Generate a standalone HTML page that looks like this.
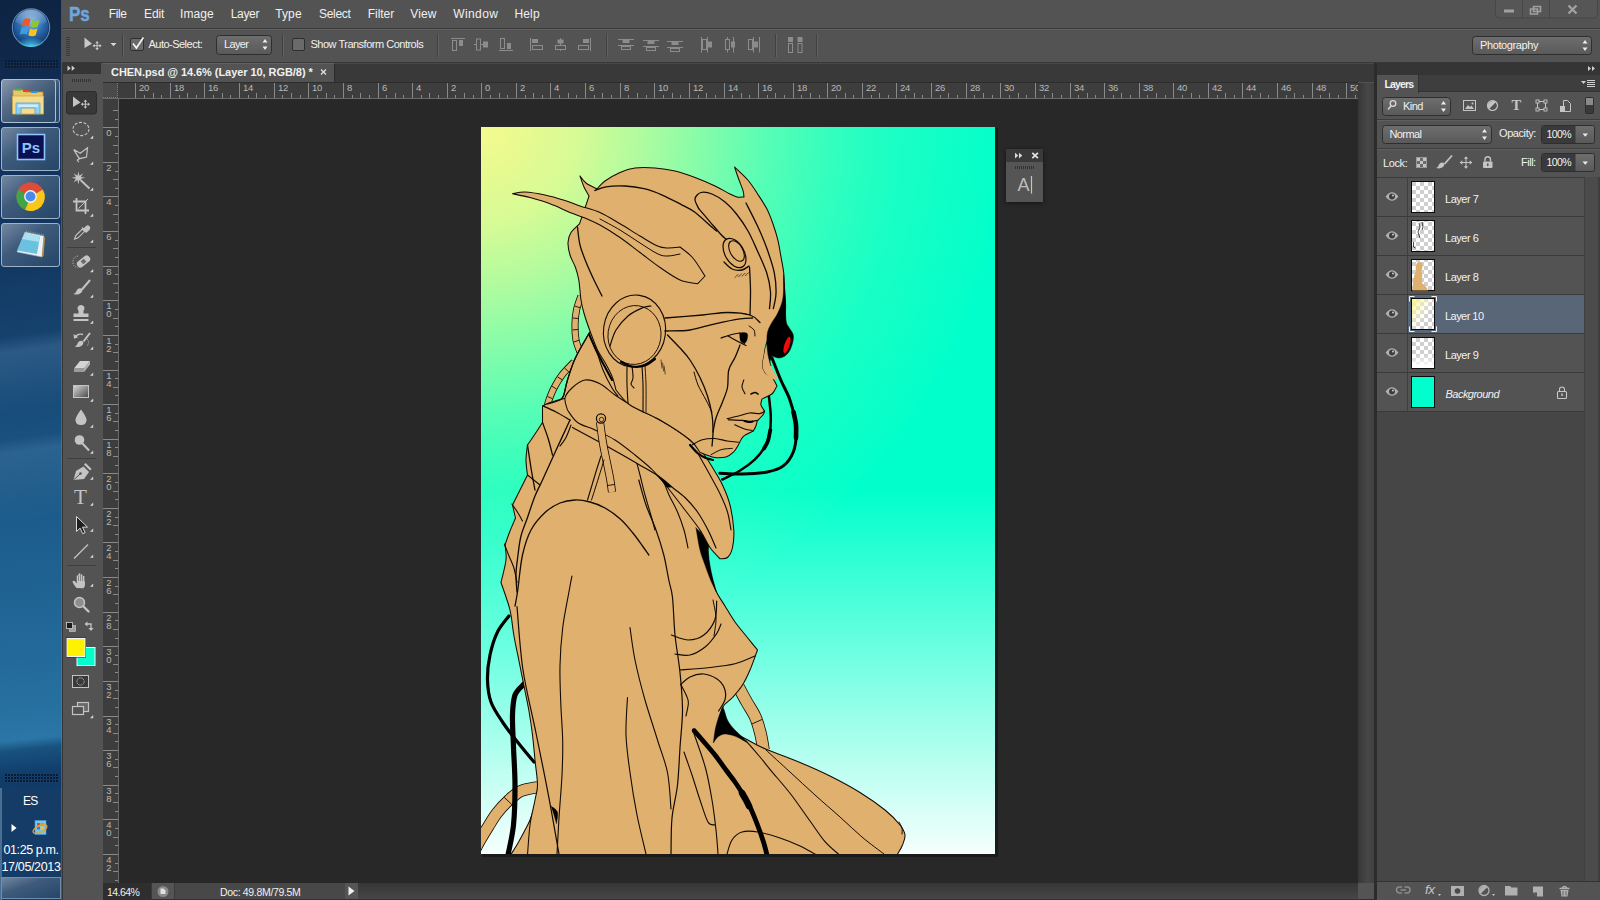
<!DOCTYPE html>
<html>
<head>
<meta charset="utf-8">
<title>CHEN.psd @ 14.6% (Layer 10, RGB/8) *</title>
<style>
html,body{margin:0;padding:0;}
body{width:1600px;height:900px;overflow:hidden;position:relative;background:#535353;font-family:"Liberation Sans",sans-serif;font-size:11px;color:#e6e6e6;}
.abs{position:absolute;}
div,span{box-sizing:border-box;}
svg{position:absolute;overflow:visible;}
.t{position:absolute;white-space:nowrap;line-height:1;}
/* taskbar */
#taskbar{left:0;top:0;width:62px;height:900px;background:linear-gradient(172deg,rgba(255,255,255,0) 0,rgba(255,255,255,0) 335px,rgba(150,195,235,.17) 350px,rgba(150,195,235,.04) 395px,rgba(255,255,255,0) 410px,rgba(255,255,255,0) 436px,rgba(150,200,235,.14) 450px,rgba(150,200,235,.03) 500px,rgba(255,255,255,0) 520px),linear-gradient(174deg,#0d2342 0px,#10284a 60px,#12305a 110px,#123862 260px,#184b78 400px,#1c5c8c 520px,#226898 640px,#2670a0 705px,#2a76a6 738px,#18527f 748px,#113d6b 772px,#0f3560 830px,#0f3560 900px);}
/* menubar */
#menubar{left:62px;top:0;width:1538px;height:28px;background:#535353;}
#optbar{left:62px;top:29px;width:1538px;height:33px;background:#535353;border-top:1px solid #636363;}
.hl{background:#383838;height:1px;left:62px;width:1538px;}
#canvas{left:119px;top:99px;width:1239px;height:784px;background:#282828;}
#tabbar{left:103px;top:63px;width:1271px;height:19px;background:#393939;border-top:1px solid #484848;}
#tab{left:103px;top:63px;width:232px;height:19px;background:#535353;border-right:1px solid #2a2a2a;border-top:1px solid #626262;}
#rulerh{left:103px;top:82px;width:1255px;height:17px;background:#3d3d3d;border-bottom:1px solid #6a6a6a;border-top:1px solid #2c2c2c;}
#rulerv{left:103px;top:99px;width:16px;height:784px;background:#3d3d3d;border-right:1px solid #6a6a6a;}
#vscroll{left:1358px;top:83px;width:16px;height:800px;background:linear-gradient(90deg,#373737,#474747 60%,#404040);}
#status{left:103px;top:883px;width:1271px;height:17px;background:#484848;border-bottom:1px solid #303030;}
#toolhead{left:63px;top:63px;width:38px;height:11px;background:#353535;}
#tools{left:63px;top:74px;width:38px;height:826px;background:#535353;}
#panelhead{left:1377px;top:63px;width:223px;height:12px;background:#353535;}
#panel{left:1377px;top:75px;width:223px;height:825px;background:#535353;}
</style>
</head>
<body>
<div id="taskbar" class="abs"></div>
<div id="menubar" class="abs"></div>
<div class="abs hl" style="top:28px"></div>
<div id="optbar" class="abs"></div>
<div class="abs hl" style="top:62px"></div>
<div id="toolhead" class="abs"></div>
<div id="tools" class="abs"></div>
<div id="tabbar" class="abs"></div>
<div id="tab" class="abs"></div>
<div id="rulerh" class="abs"></div>
<div id="rulerv" class="abs"></div>
<div id="canvas" class="abs"></div>
<div id="vscroll" class="abs"></div>
<div id="status" class="abs"></div>
<div id="panelhead" class="abs"></div>
<div id="panel" class="abs"></div>
<svg class="abs" style="left:0;top:0" width="1600" height="900" viewBox="0 0 1600 900">
<defs>
<radialGradient id="gy" gradientUnits="userSpaceOnUse" cx="481" cy="127" r="520"><stop offset="0" stop-color="#fafa8c" stop-opacity="0.98"/><stop offset="0.185" stop-color="#fafa8c" stop-opacity="0.86"/><stop offset="0.31" stop-color="#fafa8c" stop-opacity="0.7"/><stop offset="0.433" stop-color="#fafa8c" stop-opacity="0.52"/><stop offset="0.556" stop-color="#fafa8c" stop-opacity="0.34"/><stop offset="0.68" stop-color="#fafa8c" stop-opacity="0.2"/><stop offset="0.8" stop-color="#fafa8c" stop-opacity="0.1"/><stop offset="0.99" stop-color="#fafa8c" stop-opacity="0.02"/><stop offset="1" stop-color="#fafa8c" stop-opacity="0"/></radialGradient>
<linearGradient id="gw" gradientUnits="userSpaceOnUse" x1="0" y1="490" x2="0" y2="860"><stop offset="0" stop-color="#fff" stop-opacity="0"/><stop offset="1" stop-color="#fff" stop-opacity="0.98"/></linearGradient>
<clipPath id="artclip"><rect x="481" y="127" width="514" height="727"/></clipPath>
</defs>
<rect x="482" y="128" width="516" height="729" fill="#000" opacity="0.35"/>
<rect x="481" y="127" width="514" height="727" fill="#00ffcb"/>
<rect x="481" y="127" width="514" height="727" fill="url(#gy)"/>
<rect x="481" y="127" width="514" height="727" fill="url(#gw)"/>
<g clip-path="url(#artclip)">
<path d="M772.0 358.0C773.5 361.7 777.9 373.2 780.8 380.0C783.7 386.8 787.2 392.5 789.5 398.7C791.8 404.9 793.4 411.5 794.5 417.3C795.6 423.1 796.6 427.7 796.4 433.5C796.2 439.3 795.4 446.8 793.2 452.2C791.0 457.6 787.6 462.6 783.3 465.9C778.9 469.2 774.0 470.6 767.1 472.0C760.2 473.4 750.1 473.8 742.2 474.0C734.3 474.2 723.5 473.4 719.8 473.3" fill="none" stroke="#000" stroke-width="3.0" stroke-linecap="round" stroke-linejoin="round"/>
<path d="M793.5 412.0C793.9 414.2 795.6 420.7 796.0 425.0C796.4 429.3 796.0 435.8 796.0 438.0" fill="none" stroke="#000" stroke-width="4.6" stroke-linecap="round" stroke-linejoin="round"/>
<path d="M768.0 392.0C768.2 392.9 768.5 393.2 769.0 397.4C769.5 401.6 770.7 411.3 770.8 417.3C770.9 423.3 770.6 428.5 769.6 433.5C768.6 438.5 767.1 442.8 764.6 447.2C762.1 451.6 758.9 455.7 754.7 459.6C750.6 463.5 745.1 467.5 739.7 470.8C734.3 474.1 725.2 478.1 722.3 479.5" fill="none" stroke="#000" stroke-width="2.5" stroke-linecap="round" stroke-linejoin="round"/>
<path d="M770.3 430.0C769.9 431.8 769.0 437.9 768.0 441.0C767.0 444.1 764.7 447.2 764.0 448.5" fill="none" stroke="#000" stroke-width="3.8" stroke-linecap="round" stroke-linejoin="round"/>
<path d="M509.0 616.0C507.1 618.7 500.7 625.5 497.5 632.0C494.3 638.5 491.7 647.0 490.0 655.0C488.3 663.0 487.3 672.2 487.5 680.0C487.7 687.8 488.5 695.0 491.0 702.0C493.5 709.0 498.1 715.3 502.5 722.0C506.9 728.7 512.2 735.3 517.5 742.0C522.8 748.7 531.2 758.7 534.0 762.0" fill="none" stroke="#000" stroke-width="3.2" stroke-linecap="round" stroke-linejoin="round"/>
<path d="M581.0 296.0C580.2 298.3 577.5 305.2 576.5 310.0C575.5 314.8 575.1 320.0 575.0 325.0C574.9 330.0 575.2 335.5 576.0 340.0C576.8 344.5 579.3 350.0 580.0 352.0" fill="none" stroke="#120a03" stroke-width="7.1" stroke-linecap="butt"/>
<path d="M581.0 296.0C580.2 298.3 577.5 305.2 576.5 310.0C575.5 314.8 575.1 320.0 575.0 325.0C574.9 330.0 575.2 335.5 576.0 340.0C576.8 344.5 579.3 350.0 580.0 352.0" fill="none" stroke="#e0b06f" stroke-width="5.5" stroke-linecap="butt"/>
<path d="M580.1 307.8 L574.9 306.1" stroke="#120a03" stroke-width="0.9"/>
<path d="M578.4 318.5 L572.9 318.0" stroke="#120a03" stroke-width="0.9"/>
<path d="M578.1 329.5 L572.6 329.9" stroke="#120a03" stroke-width="0.9"/>
<path d="M579.0 340.2 L573.8 342.0" stroke="#120a03" stroke-width="0.9"/>
<path d="M574.0 362.0C572.0 364.2 565.3 370.7 562.0 375.0C558.7 379.3 556.2 383.8 554.0 388.0C551.8 392.2 550.2 396.7 549.0 400.0C547.8 403.3 547.3 406.7 547.0 408.0" fill="none" stroke="#120a03" stroke-width="7.1" stroke-linecap="butt"/>
<path d="M574.0 362.0C572.0 364.2 565.3 370.7 562.0 375.0C558.7 379.3 556.2 383.8 554.0 388.0C551.8 392.2 550.2 396.7 549.0 400.0C547.8 403.3 547.3 406.7 547.0 408.0" fill="none" stroke="#e0b06f" stroke-width="5.5" stroke-linecap="butt"/>
<path d="M568.7 371.8 L564.6 368.1" stroke="#120a03" stroke-width="0.9"/>
<path d="M562.3 379.8 L557.6 377.0" stroke="#120a03" stroke-width="0.9"/>
<path d="M556.6 389.1 L551.9 386.2" stroke="#120a03" stroke-width="0.9"/>
<path d="M552.5 398.7 L547.5 396.5" stroke="#120a03" stroke-width="0.9"/>
<path d="M538.0 787.0C535.2 787.7 525.8 788.8 521.0 791.0C516.2 793.2 513.0 796.3 509.0 800.0C505.0 803.7 500.5 808.5 497.0 813.0C493.5 817.5 491.0 822.2 488.0 827.0C485.0 831.8 481.7 837.2 479.0 842.0C476.3 846.8 473.2 853.7 472.0 856.0" fill="none" stroke="#120a03" stroke-width="12.1" stroke-linecap="butt"/>
<path d="M538.0 787.0C535.2 787.7 525.8 788.8 521.0 791.0C516.2 793.2 513.0 796.3 509.0 800.0C505.0 803.7 500.5 808.5 497.0 813.0C493.5 817.5 491.0 822.2 488.0 827.0C485.0 831.8 481.7 837.2 479.0 842.0C476.3 846.8 473.2 853.7 472.0 856.0" fill="none" stroke="#e0b06f" stroke-width="10.5" stroke-linecap="butt"/>
<path d="M511.9 804.5 L504.2 797.4" stroke="#120a03" stroke-width="0.9"/>
<path d="M524.0 684.0C522.5 685.8 516.9 689.8 515.0 695.0C513.1 700.2 512.8 706.3 512.5 715.0C512.2 723.7 513.1 735.3 513.5 747.0C513.9 758.7 515.0 772.0 515.0 785.0C515.0 798.0 514.7 813.3 513.5 825.0C512.3 836.7 508.9 850.0 508.0 855.0" fill="none" stroke="#000" stroke-width="5.2" stroke-linecap="round" stroke-linejoin="round"/>
<path d="M535.0 805.0C534.2 807.5 531.8 815.5 530.0 820.0C528.2 824.5 526.0 828.2 524.0 832.0C522.0 835.8 520.3 839.0 518.0 843.0C515.7 847.0 511.3 853.8 510.0 856.0L510.0 856.0C513.7 856.0 528.3 856.0 532.0 856.0L532.0 856.0C532.5 847.5 534.5 813.5 535.0 805.0Z" fill="#e0b06f" stroke="#120a03" stroke-width="1.05" stroke-linejoin="round" stroke-linecap="round" />
<path d="M738.5 687.0C739.9 689.5 743.9 697.0 746.7 702.0C749.5 707.0 753.0 711.8 755.3 717.0C757.6 722.2 759.0 727.5 760.4 733.0C761.8 738.5 763.0 747.2 763.5 750.0" fill="none" stroke="#120a03" stroke-width="12.6" stroke-linecap="butt"/>
<path d="M738.5 687.0C739.9 689.5 743.9 697.0 746.7 702.0C749.5 707.0 753.0 711.8 755.3 717.0C757.6 722.2 759.0 727.5 760.4 733.0C761.8 738.5 763.0 747.2 763.5 750.0" fill="none" stroke="#e0b06f" stroke-width="11" stroke-linecap="butt"/>
<path d="M761.9 719.5 L751.9 724.0" stroke="#120a03" stroke-width="0.9"/>
<path d="M588.8 333.8C586.5 337.9 578.5 351.0 575.0 358.8C571.5 366.5 569.4 374.0 567.5 380.0C565.6 386.0 565.0 391.7 563.8 395.0C562.5 398.3 562.7 398.5 560.0 400.0C557.3 401.5 549.6 403.3 547.5 404.0L547.5 404.0C556.2 406.7 584.6 419.0 600.0 420.0C615.4 421.0 633.3 411.7 640.0 410.0L640.0 410.0C637.5 405.0 630.7 390.0 625.0 380.0C619.3 370.0 611.5 357.8 606.0 350.0C600.5 342.2 594.9 335.7 592.0 333.0C589.1 330.3 589.3 333.6 588.8 333.8Z" fill="#e0b06f" stroke="#120a03" stroke-width="1.05" stroke-linejoin="round" stroke-linecap="round" />
<path d="M640.0 410.0C633.3 407.5 612.2 397.0 600.0 395.0C587.8 393.0 575.8 396.6 567.0 398.0C558.2 399.4 550.8 402.6 547.5 403.5L547.5 403.5C546.7 403.9 543.3 405.6 542.5 406.0L542.5 406.0C542.5 408.8 542.5 419.8 542.5 422.5L542.5 422.5C541.2 424.4 537.5 430.2 535.0 434.0C532.5 437.8 528.8 443.2 527.5 445.0L527.5 445.0C527.2 447.5 526.0 455.0 526.0 460.0C526.0 465.0 527.2 472.5 527.5 475.0L527.5 475.0C526.2 477.5 522.5 485.0 520.0 490.0C517.5 495.0 513.8 502.5 512.5 505.0L512.5 505.0C513.0 507.2 515.0 515.8 515.5 518.0L515.5 518.0C514.6 520.2 511.8 526.5 510.0 531.0C508.2 535.5 505.8 542.7 505.0 545.0L505.0 545.0C505.2 547.5 506.7 553.8 506.0 560.0C505.3 566.2 501.8 578.8 501.0 582.5L501.0 582.5C502.5 587.1 507.9 601.2 510.0 610.0C512.1 618.8 512.3 626.7 513.8 635.0C515.2 643.3 517.1 651.7 518.8 660.0C520.4 668.3 522.1 676.7 523.8 685.0C525.4 693.3 527.3 701.7 528.8 710.0C530.2 718.3 531.5 726.7 532.5 735.0C533.5 743.3 534.2 751.7 535.0 760.0C535.8 768.3 537.5 778.3 537.5 785.0C537.5 791.7 536.2 793.3 535.0 800.0C533.8 806.7 531.2 815.8 530.0 825.0C528.8 834.2 527.9 850.0 527.5 855.0L527.5 855.0C589.1 855.0 835.4 855.0 897.0 855.0L897.0 855.0C897.9 853.3 901.2 848.3 902.5 845.0C903.8 841.7 905.4 838.3 905.0 835.0C904.6 831.7 903.3 829.2 900.0 825.0C896.7 820.8 891.7 815.4 885.0 810.0C878.3 804.6 869.2 798.2 860.0 792.5C850.8 786.8 840.0 781.0 830.0 776.0C820.0 771.0 810.8 767.0 800.0 762.5C789.2 758.0 774.2 752.8 765.0 748.8C755.8 744.8 751.2 741.5 745.0 738.5C738.8 735.5 730.8 732.2 728.0 731.0L728.0 731.0C726.3 730.2 719.7 726.8 718.0 726.0L718.0 726.0C718.8 722.9 720.1 712.2 722.5 707.5C724.9 702.8 729.2 701.2 732.5 697.5C735.8 693.8 739.6 689.6 742.5 685.0C745.4 680.4 747.5 675.8 750.0 670.0C752.5 664.2 756.2 653.3 757.5 650.0L757.5 650.0C755.8 647.8 750.8 641.7 747.0 637.0C743.2 632.3 738.7 627.2 735.0 622.0C731.3 616.8 728.2 611.2 725.0 606.0C721.8 600.8 718.3 596.2 716.0 591.0C713.7 585.8 712.2 579.8 711.0 575.0C709.8 570.2 709.6 568.2 708.8 562.5C707.9 556.8 707.5 546.4 706.0 541.0C704.5 535.6 702.7 541.8 700.0 530.0C697.3 518.2 700.0 490.0 690.0 470.0C680.0 450.0 648.3 420.0 640.0 410.0Z" fill="#e0b06f" stroke="#120a03" stroke-width="1.05" stroke-linejoin="round" stroke-linecap="round" />
<path d="M723.0 707.0C722.3 708.5 720.2 712.5 719.0 716.0C717.8 719.5 716.5 723.5 715.5 728.0C714.5 732.5 713.7 740.5 713.3 743.0L713.3 743.0C713.8 742.2 715.5 739.7 716.5 738.5C717.5 737.3 718.0 736.8 719.4 736.0C720.8 735.2 722.5 734.0 725.0 734.0C727.5 734.0 731.7 735.0 734.5 736.0C737.3 737.0 739.8 738.5 742.0 739.7C744.2 740.9 747.0 742.5 748.0 743.0L748.0 743.0C747.2 742.1 745.2 739.8 743.0 737.5C740.8 735.2 737.0 732.2 734.5 729.5C732.0 726.8 729.7 724.1 728.0 721.0C726.3 717.9 725.3 713.3 724.5 711.0C723.7 708.7 723.2 707.7 723.0 707.0Z" fill="#000" stroke="#120a03" stroke-width="0.4" stroke-linejoin="round" stroke-linecap="round" />
<path d="M696.0 528.0C696.7 531.7 698.5 543.8 700.0 550.0C701.5 556.2 703.2 559.8 705.0 565.0C706.8 570.2 709.1 576.5 711.0 581.0C712.9 585.5 715.6 590.2 716.5 592.0L716.5 592.0C715.8 589.6 713.7 582.4 712.5 577.5C711.3 572.6 710.2 567.4 709.5 562.5C708.8 557.6 708.1 551.1 708.5 548.0C708.9 544.9 711.4 544.7 712.0 544.0L712.0 544.0C709.3 541.3 698.7 530.7 696.0 528.0Z" fill="#000" stroke="#120a03" stroke-width="0.5" stroke-linejoin="round" stroke-linecap="round" />
<path d="M567.5 410.0C567.1 408.0 564.2 401.8 565.0 398.0C565.8 394.2 569.2 390.5 572.5 387.5C575.8 384.5 580.4 380.6 585.0 380.0C589.6 379.4 595.0 381.2 600.0 383.8C605.0 386.2 609.2 391.0 615.0 395.0C620.8 399.0 628.3 403.8 635.0 407.5C641.7 411.2 648.8 414.2 655.0 417.5C661.2 420.8 666.7 423.8 672.5 427.5C678.3 431.2 685.0 435.8 690.0 440.0C695.0 444.2 698.8 447.9 702.5 452.5C706.2 457.1 709.2 462.1 712.5 467.5C715.8 472.9 719.6 478.8 722.5 485.0C725.4 491.2 728.1 497.5 730.0 505.0C731.9 512.5 733.3 522.9 733.8 530.0C734.2 537.1 733.5 542.9 732.5 547.5C731.5 552.1 729.6 555.6 727.5 557.5C725.4 559.4 721.2 558.5 720.0 558.8L720.0 558.8C718.3 556.9 713.3 552.3 710.0 547.5C706.7 542.7 704.2 536.2 700.0 530.0C695.8 523.8 690.4 517.1 685.0 510.0C679.6 502.9 672.9 494.2 667.5 487.5C662.1 480.8 657.9 475.4 652.5 470.0C647.1 464.6 641.2 460.0 635.0 455.0C628.8 450.0 621.7 444.2 615.0 440.0C608.3 435.8 601.2 432.9 595.0 430.0C588.8 427.1 582.1 425.8 577.5 422.5C572.9 419.2 569.2 412.1 567.5 410.0Z" fill="#e0b06f" stroke="#120a03" stroke-width="1.05" stroke-linejoin="round" stroke-linecap="round" />
<path d="M589.0 196.0C588.2 194.5 585.5 190.3 584.0 187.0C582.5 183.7 580.7 177.8 580.0 176.0L580.0 176.0C581.0 177.2 583.2 180.8 586.0 183.0C588.8 185.2 595.2 188.0 597.0 189.0L596.0 190.0C597.5 188.5 601.0 183.9 605.0 181.0C609.0 178.1 615.0 174.7 620.0 172.5C625.0 170.3 629.2 168.8 635.0 168.0C640.8 167.2 648.3 167.5 655.0 168.0C661.7 168.5 668.3 169.4 675.0 171.0C681.7 172.6 688.3 175.0 695.0 177.5C701.7 180.0 709.2 183.2 715.0 186.0C720.8 188.8 726.3 192.2 730.0 194.0C733.7 195.8 734.7 196.5 737.0 197.0C739.3 197.5 742.8 197.0 744.0 197.0L744.0 197.0C743.8 195.9 743.9 193.7 743.0 190.6C742.1 187.5 739.8 182.2 738.4 178.3C737.0 174.4 735.2 168.9 734.6 167.0L734.6 167.0C736.8 169.2 744.1 175.7 747.8 180.0C751.5 184.3 753.9 188.2 757.0 193.0C760.1 197.8 764.0 203.4 766.7 208.6C769.4 213.8 771.1 218.7 773.0 224.0C774.9 229.3 776.7 235.2 778.0 240.7C779.3 246.2 780.0 251.7 781.0 257.0C782.0 262.4 783.1 267.3 783.7 272.8C784.3 278.3 784.3 284.6 784.6 290.0C784.9 295.4 785.5 299.8 785.6 305.0C785.7 310.2 785.1 318.3 785.0 321.0L785.0 321.0C782.8 322.5 775.2 326.0 772.0 330.0C768.8 334.0 767.3 340.7 766.0 345.0C764.7 349.3 764.6 352.7 764.0 356.0C763.4 359.3 762.3 362.2 762.5 365.0C762.7 367.8 763.3 370.3 765.0 372.5C766.7 374.7 770.5 375.8 772.5 378.0C774.5 380.2 776.2 384.7 777.0 386.0L777.0 386.0C776.2 387.2 774.5 391.6 772.5 393.5C770.5 395.4 766.8 396.6 765.0 397.5C763.2 398.4 762.5 398.8 762.0 399.0L762.0 399.0C761.8 400.0 760.5 402.9 760.9 404.9C761.3 406.9 764.0 410.0 764.6 411.0L764.6 411.0C764.4 411.5 764.6 412.5 763.4 414.2C762.2 415.9 758.2 419.9 757.2 421.0L757.2 421.0C757.0 421.8 756.5 424.3 755.9 426.0C755.3 427.7 753.8 430.2 753.4 431.0L753.4 431.0C752.0 431.7 746.8 433.9 744.7 435.4C742.6 436.8 742.0 438.1 741.0 439.7C740.0 441.2 739.8 442.6 738.5 444.7C737.2 446.8 735.6 450.1 733.5 452.2C731.4 454.2 728.7 456.1 726.0 457.0C723.3 457.9 719.6 457.8 717.3 457.8C715.0 457.8 715.3 457.9 712.4 457.0C709.5 456.1 702.1 453.2 700.0 452.5L700.0 452.5C698.3 450.4 696.7 445.4 690.0 440.0C683.3 434.6 670.0 425.8 660.0 420.0C650.0 414.2 637.3 410.0 630.0 405.0C622.7 400.0 618.3 392.5 616.0 390.0L616.0 390.0C615.4 387.9 614.3 382.1 612.5 377.5C610.7 372.9 607.5 367.1 605.0 362.5C602.5 357.9 600.0 355.2 597.5 350.0C595.0 344.8 592.3 337.2 590.0 331.0C587.7 324.8 585.2 317.7 583.8 312.5C582.2 307.3 581.8 305.4 581.0 300.0C580.2 294.6 579.7 285.4 578.8 280.0C577.8 274.6 577.0 271.7 575.5 267.5C574.0 263.3 571.2 259.2 570.0 255.0C568.8 250.8 567.8 246.2 568.0 242.5C568.2 238.8 569.1 235.6 571.0 232.5C572.9 229.4 578.1 225.2 579.5 223.8L579.5 223.8C580.4 221.1 583.4 212.6 585.0 208.0C586.6 203.4 588.3 198.0 589.0 196.0Z" fill="#e0b06f" stroke="#120a03" stroke-width="1.05" stroke-linejoin="round" stroke-linecap="round" />
<path d="M512.5 193.8C514.6 193.5 519.6 191.8 525.0 192.0C530.4 192.2 538.3 193.6 545.0 195.0C551.7 196.4 559.2 198.7 565.0 200.5C570.8 202.3 574.2 204.0 580.0 206.0C585.8 208.0 593.3 209.5 600.0 212.5C606.7 215.5 613.3 219.8 620.0 223.8C626.7 227.7 633.8 232.3 640.0 236.0C646.2 239.7 652.8 244.0 657.5 246.0C662.2 248.0 664.2 247.8 668.0 248.0C671.8 248.2 678.0 247.2 680.0 247.0L680.0 247.0C682.1 248.8 688.3 252.7 692.5 257.5C696.7 262.3 702.9 272.9 705.0 276.0L705.0 276.0C703.8 277.3 698.8 282.5 697.5 283.8L697.5 283.8C694.6 283.1 686.2 282.7 680.0 280.0C673.8 277.3 666.7 272.1 660.0 267.5C653.3 262.9 646.7 257.5 640.0 252.5C633.3 247.5 626.7 242.1 620.0 237.5C613.3 232.9 605.8 228.2 600.0 225.0C594.2 221.8 590.0 220.1 585.0 218.0C580.0 215.9 575.8 214.9 570.0 212.5C564.2 210.1 556.7 206.2 550.0 203.8C543.3 201.2 536.2 199.2 530.0 197.5C523.8 195.8 515.4 194.4 512.5 193.8Z" fill="#e0b06f" stroke="#120a03" stroke-width="1.05" stroke-linejoin="round" stroke-linecap="round" />
<ellipse cx="634.5" cy="331" rx="31" ry="36" fill="#e0b06f" stroke="#120a03" stroke-width="1.1" transform="rotate(8 634.5 331)"/>
<ellipse cx="634.5" cy="335" rx="26.5" ry="29.5" fill="none" stroke="#120a03" stroke-width="0.9" transform="rotate(8 634.5 335)"/>
<path d="M610.0 346.0C611.0 343.3 613.0 335.0 616.0 330.0C619.0 325.0 623.7 319.7 628.0 316.0C632.3 312.3 638.2 309.7 642.0 308.0C645.8 306.3 649.5 306.3 651.0 306.0" fill="none" stroke="#120a03" stroke-width="1.2" stroke-linecap="round" stroke-linejoin="round"/>
<path d="M766.0 345.0C766.8 348.5 769.0 360.5 771.0 366.0C773.0 371.5 776.8 376.0 778.0 378.0L778.0 378.0C777.1 378.2 774.7 379.9 772.5 379.0C770.3 378.1 766.7 374.8 765.0 372.5C763.3 370.2 762.7 367.8 762.5 365.0C762.3 362.2 763.4 359.3 764.0 356.0C764.6 352.7 765.7 346.8 766.0 345.0Z" fill="#e0b06f" stroke="#120a03" stroke-width="0" stroke-linejoin="round" stroke-linecap="round" />
<path d="M621.0 362.0C622.8 362.8 628.0 365.9 632.0 366.5C636.0 367.1 641.2 366.8 645.0 365.5C648.8 364.2 653.3 360.1 655.0 359.0" fill="none" stroke="#000" stroke-width="2.2" stroke-linecap="round" stroke-linejoin="round"/>
<path d="M589.0 334.0C590.3 337.0 594.3 346.5 597.0 352.0C599.7 357.5 602.5 362.3 605.0 367.0C607.5 371.7 610.8 377.8 612.0 380.0" fill="none" stroke="#000" stroke-width="2.0" stroke-linecap="round" stroke-linejoin="round"/>
<path d="M690.0 445.0C691.3 446.4 695.3 451.3 698.0 453.5C700.7 455.7 703.5 456.9 706.0 458.0C708.5 459.1 711.8 459.7 713.0 460.0" fill="none" stroke="#000" stroke-width="2.2" stroke-linecap="round" stroke-linejoin="round"/>
<path d="M783.5 275.0C783.8 278.3 784.6 287.5 785.0 295.0C785.4 302.5 785.3 314.6 786.0 320.0C786.7 325.4 787.8 325.2 789.0 327.5C790.2 329.8 792.3 331.8 793.0 334.0C793.7 336.2 793.5 338.3 793.0 341.0C792.5 343.7 791.3 347.5 790.0 350.0C788.7 352.5 786.9 354.7 785.0 356.0C783.1 357.3 780.9 358.0 778.8 358.0C776.6 358.0 773.1 356.3 772.0 356.0L772.0 356.0C771.7 357.0 770.2 360.3 770.0 362.0C769.8 363.7 770.8 365.3 771.0 366.0L771.0 366.0C770.5 364.2 768.7 358.7 768.0 355.0C767.3 351.3 767.1 347.5 767.0 343.8C766.9 340.0 766.8 335.8 767.5 332.5C768.2 329.2 769.5 327.1 771.2 323.8C773.0 320.4 776.0 316.9 778.0 312.5C780.0 308.1 782.1 303.8 783.0 297.5C783.9 291.2 783.4 278.8 783.5 275.0Z" fill="#000" stroke="#120a03" stroke-width="0.5" stroke-linejoin="round" stroke-linecap="round" />
<ellipse cx="787" cy="345" rx="2.6" ry="8.6" fill="#f00a0a" transform="rotate(18 787 345)"/>
<path d="M739.5 333.0C740.2 332.9 742.7 332.3 744.0 332.5C745.3 332.7 747.0 332.8 747.5 334.0C748.0 335.2 747.5 338.3 747.0 340.0C746.5 341.7 744.9 343.3 744.5 344.0L744.5 344.0C743.8 343.5 741.3 342.8 740.5 341.0C739.7 339.2 739.7 334.3 739.5 333.0Z" fill="#000" stroke="#120a03" stroke-width="0.3" stroke-linejoin="round" stroke-linecap="round" />
<path d="M721.0 338.0C722.5 337.5 726.8 335.8 730.0 335.0C733.2 334.2 738.3 333.3 740.0 333.0" fill="none" stroke="#120a03" stroke-width="1.2" stroke-linecap="round" stroke-linejoin="round"/>
<path d="M728.0 336.0C729.5 336.8 734.0 339.4 737.0 341.0C740.0 342.6 744.5 344.8 746.0 345.5" fill="none" stroke="#120a03" stroke-width="1.2" stroke-linecap="round" stroke-linejoin="round"/>
<path d="M749.0 326.0C749.8 326.7 753.0 328.3 754.0 330.0C755.0 331.7 754.8 335.0 755.0 336.0" fill="none" stroke="#120a03" stroke-width="1.0" stroke-linecap="round" stroke-linejoin="round"/>
<path d="M551.0 806.0C551.5 807.5 553.1 812.0 554.0 815.0C554.9 818.0 556.1 822.5 556.5 824.0L556.5 824.0C556.7 822.0 558.4 815.0 557.5 812.0C556.6 809.0 552.1 807.0 551.0 806.0Z" fill="#000" stroke="#120a03" stroke-width="0.3" stroke-linejoin="round" stroke-linecap="round" />
<path d="M694.5 731.0C696.1 732.8 700.6 738.0 704.0 742.0C707.4 746.0 711.3 750.3 715.0 755.0C718.7 759.7 722.7 765.5 726.0 770.0C729.3 774.5 732.0 777.7 735.0 782.0C738.0 786.3 741.4 791.7 744.0 796.0C746.6 800.3 748.2 803.2 750.5 808.0C752.8 812.8 755.3 819.3 757.5 825.0C759.7 830.7 761.9 837.0 763.5 842.0C765.1 847.0 766.4 852.8 767.0 855.0" fill="none" stroke="#000" stroke-width="4.8" stroke-linecap="round" stroke-linejoin="round"/>
<path d="M742.0 793.0C742.7 794.2 744.8 797.8 746.0 800.0C747.2 802.2 748.5 805.0 749.0 806.0" fill="none" stroke="#000" stroke-width="6.5" stroke-linecap="round" stroke-linejoin="round"/>
<circle cx="694" cy="730.5" r="2.2" fill="#000"/>
<path d="M594.8 190.6C596.7 190.0 601.0 187.6 606.0 186.8C611.0 186.0 618.7 185.7 625.0 186.0C631.3 186.3 637.7 187.1 644.0 188.7C650.3 190.2 656.5 192.6 662.8 195.3C669.1 198.0 676.3 202.0 681.7 204.8C687.1 207.6 690.3 208.8 695.0 212.3C699.7 215.8 706.4 222.5 710.0 225.6C713.6 228.7 715.5 230.1 716.6 231.0" fill="none" stroke="#120a03" stroke-width="1.3" stroke-linecap="round" stroke-linejoin="round"/>
<path d="M577.5 227.0C577.9 230.0 578.6 239.2 580.0 245.0C581.4 250.8 583.7 256.2 586.0 262.0C588.3 267.8 591.3 274.3 594.0 280.0C596.7 285.7 600.7 293.3 602.0 296.0" fill="none" stroke="#120a03" stroke-width="1.3" stroke-linecap="round" stroke-linejoin="round"/>
<path d="M698.7 208.6C698.1 207.0 694.6 201.7 695.0 199.0C695.4 196.3 698.2 193.3 701.0 192.5C703.8 191.7 708.0 192.4 712.0 194.0C716.0 195.6 720.9 198.7 725.0 202.0C729.1 205.3 732.7 209.2 736.5 214.0C740.3 218.8 744.6 225.0 748.0 231.0C751.4 237.0 753.9 243.0 757.0 250.0C760.1 257.0 764.5 265.9 766.7 272.8C769.0 279.8 770.0 285.7 770.5 291.7C771.0 297.7 769.7 305.9 769.5 308.7" fill="none" stroke="#120a03" stroke-width="1.3" stroke-linecap="round" stroke-linejoin="round"/>
<path d="M698.7 208.6C700.6 210.8 706.2 217.4 710.0 221.8C713.8 226.2 718.7 232.1 721.4 235.0C724.1 237.9 725.2 238.3 726.0 239.0" fill="none" stroke="#120a03" stroke-width="1.3" stroke-linecap="round" stroke-linejoin="round"/>
<path d="M746.0 203.0C747.9 206.8 753.8 218.1 757.3 225.6C760.8 233.1 763.9 240.1 766.7 248.0C769.5 255.9 772.8 265.2 774.3 272.8C775.8 280.4 776.2 287.6 776.0 293.6C775.8 299.6 773.8 306.2 773.3 308.7" fill="none" stroke="#120a03" stroke-width="1.3" stroke-linecap="round" stroke-linejoin="round"/>
<ellipse cx="734.5" cy="253" rx="9.5" ry="16" fill="none" stroke="#120a03" stroke-width="1.2" transform="rotate(-30 734.5 253)"/>
<ellipse cx="736.5" cy="251" rx="6.3" ry="11.3" fill="none" stroke="#120a03" stroke-width="1.1" transform="rotate(-30 736.5 251)"/>
<path d="M724.0 262.0C725.3 263.2 729.0 267.7 732.0 269.0C735.0 270.3 739.2 270.5 742.0 270.0C744.8 269.5 747.8 266.7 749.0 266.0" fill="none" stroke="#120a03" stroke-width="1.3" stroke-linecap="round" stroke-linejoin="round"/>
<path d="M735.0 277.5C735.5 277.0 737.5 275.0 738.0 274.5" fill="none" stroke="#120a03" stroke-width="0.7" stroke-linecap="round" stroke-linejoin="round"/>
<path d="M738.5 276.9C739.0 276.4 741.0 274.4 741.5 273.9" fill="none" stroke="#120a03" stroke-width="0.7" stroke-linecap="round" stroke-linejoin="round"/>
<path d="M742.0 276.3C742.5 275.8 744.5 273.8 745.0 273.3" fill="none" stroke="#120a03" stroke-width="0.7" stroke-linecap="round" stroke-linejoin="round"/>
<path d="M745.5 275.7C746.0 275.2 748.0 273.2 748.5 272.7" fill="none" stroke="#120a03" stroke-width="0.7" stroke-linecap="round" stroke-linejoin="round"/>
<path d="M600.0 219.0C603.3 220.8 613.3 226.0 620.0 230.0C626.7 234.0 633.7 239.0 640.0 243.0C646.3 247.0 653.3 251.8 658.0 254.0C662.7 256.2 664.3 256.0 668.0 256.0C671.7 256.0 678.0 254.3 680.0 254.0" fill="none" stroke="#120a03" stroke-width="1.0" stroke-linecap="round" stroke-linejoin="round"/>
<path d="M665.0 318.0C671.2 317.5 692.1 315.9 702.5 315.0C712.9 314.1 719.6 312.5 727.5 312.5C735.4 312.5 744.6 313.3 750.0 315.0C755.4 316.7 758.3 321.2 760.0 322.5" fill="none" stroke="#120a03" stroke-width="1.3" stroke-linecap="round" stroke-linejoin="round"/>
<path d="M665.0 331.0C669.2 330.8 681.7 331.2 690.0 330.0C698.3 328.8 706.7 325.6 715.0 323.8C723.3 321.9 733.8 319.7 740.0 318.8C746.2 317.8 750.4 318.1 752.5 318.0" fill="none" stroke="#120a03" stroke-width="1.3" stroke-linecap="round" stroke-linejoin="round"/>
<path d="M749.5 267.0C749.7 270.8 750.4 282.0 750.5 290.0C750.6 298.0 750.1 310.8 750.0 315.0" fill="none" stroke="#120a03" stroke-width="1.3" stroke-linecap="round" stroke-linejoin="round"/>
<path d="M667.5 335.0C669.6 337.2 676.2 343.8 680.0 348.0C683.8 352.2 686.7 355.1 690.0 360.0C693.3 364.9 697.1 371.5 700.0 377.5C702.9 383.5 705.5 389.8 707.5 396.0C709.5 402.2 711.1 409.0 712.0 415.0C712.9 421.0 713.0 426.8 713.0 432.0C713.0 437.2 712.2 443.7 712.0 446.0" fill="none" stroke="#120a03" stroke-width="1.3" stroke-linecap="round" stroke-linejoin="round"/>
<path d="M740.0 345.0C739.2 347.1 736.9 353.3 735.0 357.5C733.1 361.7 730.0 365.0 728.8 370.0C727.5 375.0 728.5 382.2 727.5 387.5C726.5 392.8 724.4 396.9 722.5 402.0C720.6 407.1 717.6 413.0 716.0 418.0C714.4 423.0 713.5 429.7 713.0 432.0" fill="none" stroke="#120a03" stroke-width="1.3" stroke-linecap="round" stroke-linejoin="round"/>
<path d="M694.0 372.0C694.7 374.2 696.0 380.3 698.0 385.0C700.0 389.7 703.7 395.5 706.0 400.0C708.3 404.5 711.0 410.0 712.0 412.0" fill="none" stroke="#120a03" stroke-width="1.0" stroke-linecap="round" stroke-linejoin="round"/>
<path d="M743.8 380.0C743.5 381.2 741.8 384.7 742.0 387.0C742.2 389.3 744.5 392.6 745.0 393.8" fill="none" stroke="#120a03" stroke-width="1.1" stroke-linecap="round" stroke-linejoin="round"/>
<path d="M751.0 394.0C751.7 393.8 753.8 392.5 755.0 392.5C756.2 392.5 757.5 393.8 758.0 394.0" fill="none" stroke="#120a03" stroke-width="1.7" stroke-linecap="round" stroke-linejoin="round"/>
<path d="M727.3 418.6C729.2 418.2 734.8 416.9 738.5 416.0C742.2 415.1 746.2 413.4 749.7 413.0C753.2 412.6 757.2 413.9 759.6 413.6C762.0 413.4 763.3 411.9 764.0 411.5" fill="none" stroke="#120a03" stroke-width="1.2" stroke-linecap="round" stroke-linejoin="round"/>
<path d="M728.5 419.8C730.8 419.9 738.6 420.1 742.2 420.4C745.8 420.7 747.5 421.5 750.0 421.5C752.5 421.5 756.0 420.6 757.2 420.4" fill="none" stroke="#120a03" stroke-width="1.3" stroke-linecap="round" stroke-linejoin="round"/>
<path d="M744.5 421.0C745.2 421.2 747.7 421.9 749.0 422.0C750.3 422.1 751.9 421.7 752.5 421.6" fill="none" stroke="#000" stroke-width="2.0" stroke-linecap="round" stroke-linejoin="round"/>
<path d="M734.8 424.8C736.4 425.5 741.8 428.1 744.7 429.0C747.6 429.9 751.0 430.2 752.2 430.4" fill="none" stroke="#120a03" stroke-width="1.1" stroke-linecap="round" stroke-linejoin="round"/>
<path d="M692.4 444.7C694.1 443.9 698.7 440.7 702.4 439.7C706.1 438.7 710.6 438.3 714.8 438.5C718.9 438.7 723.3 440.4 727.3 441.0C731.2 441.6 736.6 442.0 738.5 442.2" fill="none" stroke="#120a03" stroke-width="1.1" stroke-linecap="round" stroke-linejoin="round"/>
<path d="M711.0 454.7C712.7 453.9 717.5 450.8 721.0 449.7C724.5 448.6 730.4 448.6 732.3 448.4" fill="none" stroke="#120a03" stroke-width="1.0" stroke-linecap="round" stroke-linejoin="round"/>
<path d="M661.0 360.0C661.2 361.3 661.8 366.7 662.0 368.0" fill="none" stroke="#120a03" stroke-width="0.6499999999999999" stroke-linecap="round" stroke-linejoin="round"/>
<path d="M662.6 363.0C662.8 364.3 663.4 369.7 663.6 371.0" fill="none" stroke="#120a03" stroke-width="0.6499999999999999" stroke-linecap="round" stroke-linejoin="round"/>
<path d="M664.2 366.0C664.4 367.3 665.0 372.7 665.2 374.0" fill="none" stroke="#120a03" stroke-width="0.6499999999999999" stroke-linecap="round" stroke-linejoin="round"/>
<path d="M627.0 367.0C627.0 370.0 626.8 379.0 627.0 385.0C627.2 391.0 627.8 400.0 628.0 403.0" fill="none" stroke="#120a03" stroke-width="1.1" stroke-linecap="round" stroke-linejoin="round"/>
<path d="M642.0 366.0C642.2 369.2 642.8 377.3 643.0 385.0C643.2 392.7 643.0 407.5 643.0 412.0" fill="none" stroke="#120a03" stroke-width="1.1" stroke-linecap="round" stroke-linejoin="round"/>
<path d="M645.0 366.0C645.2 369.2 645.8 377.3 646.0 385.0C646.2 392.7 646.0 407.5 646.0 412.0" fill="none" stroke="#120a03" stroke-width="0.8999999999999999" stroke-linecap="round" stroke-linejoin="round"/>
<path d="M632.0 366.0C632.2 368.0 633.2 375.0 633.0 378.0C632.8 381.0 630.8 382.3 631.0 384.0C631.2 385.7 633.5 387.3 634.0 388.0" fill="none" stroke="#120a03" stroke-width="1.1" stroke-linecap="round" stroke-linejoin="round"/>
<path d="M588.8 333.8C586.5 337.9 578.5 351.0 575.0 358.8C571.5 366.5 569.4 374.0 567.5 380.0C565.6 386.0 565.0 391.7 563.8 395.0C562.5 398.3 562.7 398.5 560.0 400.0C557.3 401.5 549.6 403.3 547.5 404.0" fill="none" stroke="#120a03" stroke-width="1.3" stroke-linecap="round" stroke-linejoin="round"/>
<path d="M597.0 352.0C598.0 355.0 600.5 364.0 603.0 370.0C605.5 376.0 609.5 383.7 612.0 388.0C614.5 392.3 617.0 394.7 618.0 396.0" fill="none" stroke="#120a03" stroke-width="1.1" stroke-linecap="round" stroke-linejoin="round"/>
<path d="M543.0 406.0C545.2 407.0 551.5 409.7 556.0 412.0C560.5 414.3 567.7 418.7 570.0 420.0" fill="none" stroke="#120a03" stroke-width="1.3" stroke-linecap="round" stroke-linejoin="round"/>
<path d="M570.0 420.0C567.5 425.4 559.6 442.5 555.0 452.5C550.4 462.5 545.8 472.8 542.5 480.0C539.2 487.2 537.5 489.8 535.0 496.0C532.5 502.2 529.8 510.8 527.5 517.5C525.2 524.2 522.6 529.8 521.0 536.0C519.4 542.2 518.8 548.7 518.0 555.0C517.2 561.3 516.2 567.6 516.0 573.8C515.8 579.9 516.8 589.0 517.0 592.0" fill="none" stroke="#120a03" stroke-width="1.3" stroke-linecap="round" stroke-linejoin="round"/>
<path d="M542.5 422.5C543.4 425.1 546.3 432.6 548.0 438.0C549.7 443.4 551.8 452.2 552.5 455.0" fill="none" stroke="#120a03" stroke-width="1.3" stroke-linecap="round" stroke-linejoin="round"/>
<path d="M527.5 445.0C528.1 448.8 529.8 460.5 531.0 468.0C532.2 475.5 534.3 486.3 535.0 490.0" fill="none" stroke="#120a03" stroke-width="1.3" stroke-linecap="round" stroke-linejoin="round"/>
<path d="M527.5 475.0C529.6 476.7 537.9 483.3 540.0 485.0" fill="none" stroke="#120a03" stroke-width="1.1" stroke-linecap="round" stroke-linejoin="round"/>
<path d="M512.0 504.0C513.0 505.5 516.2 510.2 518.0 513.0C519.8 515.8 521.8 519.7 522.5 521.0" fill="none" stroke="#120a03" stroke-width="1.1" stroke-linecap="round" stroke-linejoin="round"/>
<path d="M504.4 544.0C505.2 546.0 507.4 552.1 509.0 556.0C510.6 559.9 512.4 563.1 513.8 567.5C515.1 571.9 516.5 580.0 517.0 582.5" fill="none" stroke="#120a03" stroke-width="1.1" stroke-linecap="round" stroke-linejoin="round"/>
<path d="M698.8 455.0C700.6 458.3 706.5 468.5 710.0 475.0C713.5 481.5 717.1 487.6 720.0 493.8C722.9 499.9 725.7 506.0 727.5 512.0C729.3 518.0 730.4 527.0 731.0 530.0" fill="none" stroke="#120a03" stroke-width="1.1" stroke-linecap="round" stroke-linejoin="round"/>
<path d="M572.5 427.5C576.7 429.8 589.2 436.4 597.5 441.0C605.8 445.6 615.8 451.2 622.5 455.0C629.2 458.8 632.1 460.6 637.5 463.8C642.9 466.9 650.4 470.9 655.0 473.8C659.6 476.6 662.1 478.7 665.0 481.0C667.9 483.3 669.2 484.8 672.5 487.5C675.8 490.2 680.8 493.4 685.0 497.5C689.2 501.6 693.7 506.6 697.5 512.0C701.3 517.4 704.9 524.0 708.0 530.0C711.1 536.0 714.7 545.0 716.0 548.0" fill="none" stroke="#120a03" stroke-width="1.2" stroke-linecap="round" stroke-linejoin="round"/>
<path d="M637.0 463.8C637.5 465.6 638.7 469.8 640.0 475.0C641.3 480.2 643.3 488.8 645.0 495.0C646.7 501.2 648.3 506.2 650.0 512.0C651.7 517.8 654.2 527.0 655.0 530.0" fill="none" stroke="#120a03" stroke-width="1.1" stroke-linecap="round" stroke-linejoin="round"/>
<path d="M664.0 482.5C664.8 484.6 666.8 490.1 669.0 495.0C671.2 499.9 675.0 506.2 677.5 512.0C680.0 517.8 682.2 524.0 684.0 530.0C685.8 536.0 687.3 545.0 688.0 548.0" fill="none" stroke="#120a03" stroke-width="1.1" stroke-linecap="round" stroke-linejoin="round"/>
<path d="M655.0 473.8C656.7 475.0 662.2 478.8 665.0 481.0C667.8 483.2 670.8 486.0 672.0 487.0L672.0 487.0C671.2 487.0 668.7 488.0 667.0 487.0C665.3 486.0 664.0 483.2 662.0 481.0C660.0 478.8 656.2 475.0 655.0 473.8Z" fill="#000" stroke="#120a03" stroke-width="0.3" stroke-linejoin="round" stroke-linecap="round" />
<path d="M571.0 425.0C570.2 427.1 567.8 434.0 566.0 437.5C564.2 441.0 561.0 444.6 560.0 446.0" fill="none" stroke="#120a03" stroke-width="1.1" stroke-linecap="round" stroke-linejoin="round"/>
<path d="M600.0 422.0C600.4 425.0 601.6 434.3 602.5 440.0C603.4 445.7 604.2 449.7 605.5 456.0C606.8 462.3 608.9 472.0 610.0 478.0C611.1 484.0 611.7 489.7 612.0 492.0" fill="none" stroke="#120a03" stroke-width="8.1" stroke-linecap="butt"/>
<path d="M600.0 422.0C600.4 425.0 601.6 434.3 602.5 440.0C603.4 445.7 604.2 449.7 605.5 456.0C606.8 462.3 608.9 472.0 610.0 478.0C611.1 484.0 611.7 489.7 612.0 492.0" fill="none" stroke="#e0b06f" stroke-width="6.5" stroke-linecap="butt"/>
<path d="M615.0 484.4 L607.0 485.6" stroke="#120a03" stroke-width="0.9"/>
<circle cx="601" cy="418.5" r="4.6" fill="#e0b06f" stroke="#120a03" stroke-width="1.2"/><circle cx="601.5" cy="419.500" r="2.200" fill="none" stroke="#120a03" stroke-width="0.800"/>
<path d="M601.0 456.0C600.0 459.2 597.2 467.7 595.0 475.0C592.8 482.3 588.8 495.8 587.5 500.0" fill="none" stroke="#120a03" stroke-width="1.1" stroke-linecap="round" stroke-linejoin="round"/>
<path d="M604.0 460.0C603.1 463.0 600.6 471.3 598.5 478.0C596.4 484.7 592.7 496.3 591.5 500.0" fill="none" stroke="#120a03" stroke-width="1.0" stroke-linecap="round" stroke-linejoin="round"/>
<path d="M515.0 606.0C515.4 603.7 516.2 600.5 517.5 592.0C518.8 583.5 520.2 565.3 522.5 555.0C524.8 544.7 527.2 537.1 531.0 530.0C534.8 522.9 540.2 517.0 545.0 512.5C549.8 508.0 555.0 505.1 560.0 503.0C565.0 500.9 570.0 500.2 575.0 500.0C580.0 499.8 585.0 500.7 590.0 502.0C595.0 503.3 600.0 505.2 605.0 508.0C610.0 510.8 615.4 514.7 620.0 518.8C624.6 522.8 628.8 528.0 632.5 532.5C636.2 537.0 639.8 542.2 642.5 546.0C645.2 549.8 647.7 553.5 648.8 555.0" fill="none" stroke="#120a03" stroke-width="1.3" stroke-linecap="round" stroke-linejoin="round"/>
<path d="M517.0 606.7C518.0 617.2 519.8 649.0 523.0 670.0C526.2 691.0 531.7 711.9 536.0 733.0C540.3 754.1 544.9 776.5 548.7 796.7C552.5 816.9 557.3 844.5 559.0 854.0" fill="none" stroke="#120a03" stroke-width="1.2" stroke-linecap="round" stroke-linejoin="round"/>
<path d="M572.0 576.0C571.5 578.3 570.8 581.4 569.3 590.0C567.8 598.6 564.2 615.2 562.7 627.8C561.2 640.4 560.3 653.0 560.0 665.6C559.7 678.2 560.3 690.8 560.8 703.4C561.2 716.0 562.5 729.1 562.7 741.0C562.9 752.9 562.6 762.2 562.0 775.0C561.4 787.8 559.8 804.8 559.0 818.0C558.2 831.2 557.3 848.0 557.0 854.0" fill="none" stroke="#120a03" stroke-width="1.1" stroke-linecap="round" stroke-linejoin="round"/>
<path d="M630.0 627.5C630.8 632.9 632.5 647.9 635.0 660.0C637.5 672.1 641.2 686.7 645.0 700.0C648.8 713.3 653.8 727.9 657.5 740.0C661.2 752.1 665.2 761.0 667.5 772.5C669.8 784.0 670.4 802.9 671.0 809.0" fill="none" stroke="#120a03" stroke-width="1.1" stroke-linecap="round" stroke-linejoin="round"/>
<path d="M627.5 697.5C627.2 703.8 625.6 722.5 626.0 735.0C626.4 747.5 628.2 759.2 630.0 772.5C631.8 785.8 634.3 801.4 637.0 815.0C639.7 828.6 644.5 847.5 646.0 854.0" fill="none" stroke="#120a03" stroke-width="1.1" stroke-linecap="round" stroke-linejoin="round"/>
<path d="M638.8 480.0C640.0 484.2 643.1 496.7 646.0 505.0C648.9 513.3 653.0 521.7 656.0 530.0C659.0 538.3 661.6 546.7 663.8 555.0C665.9 563.3 667.3 572.9 668.8 580.0C670.2 587.1 671.5 588.3 672.5 597.5C673.5 606.7 673.8 622.5 675.0 635.0C676.2 647.5 678.8 660.0 680.0 672.5C681.2 685.0 682.5 697.5 682.5 710.0C682.5 722.5 680.8 735.0 680.0 747.5C679.2 760.0 678.8 773.2 677.5 785.0C676.2 796.8 673.1 806.5 672.0 818.0C670.9 829.5 671.2 848.0 671.0 854.0" fill="none" stroke="#120a03" stroke-width="1.2" stroke-linecap="round" stroke-linejoin="round"/>
<path d="M671.4 635.0C674.2 635.8 683.0 640.0 688.4 640.0C693.8 640.0 699.1 638.6 703.5 635.3C707.9 632.0 712.6 625.7 714.8 620.0C717.0 614.3 716.4 604.2 716.7 601.0" fill="none" stroke="#120a03" stroke-width="1.2" stroke-linecap="round" stroke-linejoin="round"/>
<path d="M675.0 654.0C677.5 654.2 684.9 656.2 690.0 655.0C695.1 653.8 700.9 650.3 705.4 646.7C709.9 643.1 714.1 637.3 716.7 633.5C719.3 629.7 720.3 625.6 721.0 624.0" fill="none" stroke="#120a03" stroke-width="1.2" stroke-linecap="round" stroke-linejoin="round"/>
<path d="M680.0 670.0C685.0 669.6 700.8 668.5 710.0 667.5C719.2 666.5 727.5 665.7 735.0 663.8C742.5 661.8 751.7 657.3 755.0 656.0" fill="none" stroke="#120a03" stroke-width="1.1" stroke-linecap="round" stroke-linejoin="round"/>
<path d="M680.8 684.5C682.3 683.2 686.2 678.8 690.0 677.0C693.8 675.2 699.0 673.7 703.5 674.0C708.0 674.3 713.2 676.5 716.7 678.8C720.2 681.1 722.9 684.5 724.3 688.0C725.7 691.5 726.0 695.8 725.0 699.6C724.0 703.4 719.7 709.1 718.6 711.0" fill="none" stroke="#120a03" stroke-width="1.2" stroke-linecap="round" stroke-linejoin="round"/>
<path d="M680.8 684.5C681.8 686.4 685.2 692.7 686.5 695.8C687.8 698.9 688.5 699.6 688.4 703.0C688.3 706.4 686.4 713.8 686.0 716.0" fill="none" stroke="#120a03" stroke-width="1.1" stroke-linecap="round" stroke-linejoin="round"/>
<path d="M713.0 600.0C713.5 603.0 715.8 612.0 716.0 618.0C716.2 624.0 714.3 633.0 714.0 636.0" fill="none" stroke="#120a03" stroke-width="1.0" stroke-linecap="round" stroke-linejoin="round"/>
<path d="M693.0 731.0C694.0 733.8 696.8 741.5 699.0 748.0C701.2 754.5 703.8 761.3 706.0 770.0C708.2 778.7 710.3 790.0 712.0 800.0C713.7 810.0 715.0 821.0 716.0 830.0C717.0 839.0 717.7 850.0 718.0 854.0" fill="none" stroke="#120a03" stroke-width="1.1" stroke-linecap="round" stroke-linejoin="round"/>
<path d="M684.0 752.0C685.3 755.8 689.3 767.0 692.0 775.0C694.7 783.0 697.3 792.2 700.0 800.0C702.7 807.8 705.5 817.8 708.0 822.0C710.5 826.2 713.8 824.5 715.0 825.0" fill="none" stroke="#120a03" stroke-width="1.1" stroke-linecap="round" stroke-linejoin="round"/>
<path d="M745.8 740.6C748.2 743.3 755.6 751.8 760.0 757.0C764.4 762.2 766.8 765.5 772.0 771.8C777.2 778.0 784.7 786.3 791.0 794.5C797.3 802.7 804.3 813.1 810.0 821.0C815.7 828.9 820.3 836.2 825.0 841.7C829.7 847.2 836.2 852.0 838.4 854.0" fill="none" stroke="#120a03" stroke-width="1.1" stroke-linecap="round" stroke-linejoin="round"/>
<path d="M766.0 750.0C770.0 753.7 781.8 764.5 790.0 772.0C798.2 779.5 806.7 787.5 815.0 795.0C823.3 802.5 832.2 810.0 840.0 817.0C847.8 824.0 854.7 830.8 862.0 837.0C869.3 843.2 880.3 851.2 884.0 854.0" fill="none" stroke="#120a03" stroke-width="1.0" stroke-linecap="round" stroke-linejoin="round"/>
<path d="M727.0 854.0C727.8 851.7 729.5 843.7 732.0 840.0C734.5 836.3 737.7 833.3 742.0 832.0C746.3 830.7 751.7 831.0 758.0 832.0C764.3 833.0 773.0 835.7 780.0 838.0C787.0 840.3 794.2 843.3 800.0 846.0C805.8 848.7 812.5 852.7 815.0 854.0" fill="none" stroke="#120a03" stroke-width="1.1" stroke-linecap="round" stroke-linejoin="round"/>
<path d="M899.0 822.0C899.5 823.0 901.5 826.0 902.0 828.0C902.5 830.0 902.0 833.0 902.0 834.0" fill="none" stroke="#120a03" stroke-width="1.0" stroke-linecap="round" stroke-linejoin="round"/>
</g>
</svg>
<div class="abs" style="left:61px;top:0px;width:1px;height:900px;background:#5d7a98;opacity:.55"></div>
<div class="abs" style="left:5px;top:60px;width:54px;height:9px;background-image:radial-gradient(circle at 1px 1px,#0a1a30 0.9px,rgba(120,150,185,.35) 1.3px,transparent 1.6px);background-size:3px 3px;"></div>
<div class="abs" style="left:5px;top:774px;width:54px;height:9px;background-image:radial-gradient(circle at 1px 1px,#0a1a30 0.9px,rgba(120,150,185,.35) 1.3px,transparent 1.6px);background-size:3px 3px;"></div>
<div class="abs" style="left:0px;top:788px;width:61px;height:112px;background:#143c66;border-left:2px solid #4a6d92;"></div>
<div class="abs" style="left:62px;top:63px;width:1px;height:837px;background:#363636"></div>
<div class="abs" style="left:103px;top:83px;width:15px;height:15px;background:#4a4a4a;"></div>
<div class="abs" style="left:119px;top:83px;width:1239px;height:15px;overflow:hidden"><span class="t rl" style="left:20px;top:0px;font-size:9.5px;color:#b8b8b8;letter-spacing:-0.2px">20</span><span class="t rl" style="left:55px;top:0px;font-size:9.5px;color:#b8b8b8;letter-spacing:-0.2px">18</span><span class="t rl" style="left:89px;top:0px;font-size:9.5px;color:#b8b8b8;letter-spacing:-0.2px">16</span><span class="t rl" style="left:124px;top:0px;font-size:9.5px;color:#b8b8b8;letter-spacing:-0.2px">14</span><span class="t rl" style="left:159px;top:0px;font-size:9.5px;color:#b8b8b8;letter-spacing:-0.2px">12</span><span class="t rl" style="left:193px;top:0px;font-size:9.5px;color:#b8b8b8;letter-spacing:-0.2px">10</span><span class="t rl" style="left:228px;top:0px;font-size:9.5px;color:#b8b8b8;letter-spacing:-0.2px">8</span><span class="t rl" style="left:263px;top:0px;font-size:9.5px;color:#b8b8b8;letter-spacing:-0.2px">6</span><span class="t rl" style="left:297px;top:0px;font-size:9.5px;color:#b8b8b8;letter-spacing:-0.2px">4</span><span class="t rl" style="left:332px;top:0px;font-size:9.5px;color:#b8b8b8;letter-spacing:-0.2px">2</span><span class="t rl" style="left:366px;top:0px;font-size:9.5px;color:#b8b8b8;letter-spacing:-0.2px">0</span><span class="t rl" style="left:401px;top:0px;font-size:9.5px;color:#b8b8b8;letter-spacing:-0.2px">2</span><span class="t rl" style="left:435px;top:0px;font-size:9.5px;color:#b8b8b8;letter-spacing:-0.2px">4</span><span class="t rl" style="left:470px;top:0px;font-size:9.5px;color:#b8b8b8;letter-spacing:-0.2px">6</span><span class="t rl" style="left:505px;top:0px;font-size:9.5px;color:#b8b8b8;letter-spacing:-0.2px">8</span><span class="t rl" style="left:539px;top:0px;font-size:9.5px;color:#b8b8b8;letter-spacing:-0.2px">10</span><span class="t rl" style="left:574px;top:0px;font-size:9.5px;color:#b8b8b8;letter-spacing:-0.2px">12</span><span class="t rl" style="left:609px;top:0px;font-size:9.5px;color:#b8b8b8;letter-spacing:-0.2px">14</span><span class="t rl" style="left:643px;top:0px;font-size:9.5px;color:#b8b8b8;letter-spacing:-0.2px">16</span><span class="t rl" style="left:678px;top:0px;font-size:9.5px;color:#b8b8b8;letter-spacing:-0.2px">18</span><span class="t rl" style="left:712px;top:0px;font-size:9.5px;color:#b8b8b8;letter-spacing:-0.2px">20</span><span class="t rl" style="left:747px;top:0px;font-size:9.5px;color:#b8b8b8;letter-spacing:-0.2px">22</span><span class="t rl" style="left:781px;top:0px;font-size:9.5px;color:#b8b8b8;letter-spacing:-0.2px">24</span><span class="t rl" style="left:816px;top:0px;font-size:9.5px;color:#b8b8b8;letter-spacing:-0.2px">26</span><span class="t rl" style="left:851px;top:0px;font-size:9.5px;color:#b8b8b8;letter-spacing:-0.2px">28</span><span class="t rl" style="left:885px;top:0px;font-size:9.5px;color:#b8b8b8;letter-spacing:-0.2px">30</span><span class="t rl" style="left:920px;top:0px;font-size:9.5px;color:#b8b8b8;letter-spacing:-0.2px">32</span><span class="t rl" style="left:955px;top:0px;font-size:9.5px;color:#b8b8b8;letter-spacing:-0.2px">34</span><span class="t rl" style="left:989px;top:0px;font-size:9.5px;color:#b8b8b8;letter-spacing:-0.2px">36</span><span class="t rl" style="left:1024px;top:0px;font-size:9.5px;color:#b8b8b8;letter-spacing:-0.2px">38</span><span class="t rl" style="left:1058px;top:0px;font-size:9.5px;color:#b8b8b8;letter-spacing:-0.2px">40</span><span class="t rl" style="left:1093px;top:0px;font-size:9.5px;color:#b8b8b8;letter-spacing:-0.2px">42</span><span class="t rl" style="left:1127px;top:0px;font-size:9.5px;color:#b8b8b8;letter-spacing:-0.2px">44</span><span class="t rl" style="left:1162px;top:0px;font-size:9.5px;color:#b8b8b8;letter-spacing:-0.2px">46</span><span class="t rl" style="left:1197px;top:0px;font-size:9.5px;color:#b8b8b8;letter-spacing:-0.2px">48</span><span class="t rl" style="left:1231px;top:0px;font-size:9.5px;color:#b8b8b8;letter-spacing:-0.2px">50</span></div>
<div class="abs" style="left:103px;top:883px;width:48px;height:16px;background:#2e2e2e"></div>
<div class="abs" style="left:151px;top:883px;width:1px;height:16px;background:#3a3a3a"></div>
<div class="abs" style="left:152px;top:883px;width:22px;height:16px;background:#555"></div>
<div class="abs" style="left:174px;top:883px;width:1px;height:16px;background:#3a3a3a"></div>
<div class="abs" style="left:345px;top:883px;width:13px;height:16px;background:#555"></div>
<div class="abs" style="left:358px;top:883px;width:1000px;height:16px;background:linear-gradient(#363636,#474747)"></div>
<div class="abs" style="left:1358px;top:883px;width:16px;height:16px;background:#545454"></div>
<div class="abs" style="left:1006px;top:149px;width:37px;height:53px;background:#555;box-shadow:0 1px 4px rgba(0,0,0,.55);border-radius:2px 2px 0 0"></div>
<div class="abs" style="left:1006px;top:149px;width:37px;height:12.5px;background:#3a3a3a;border-radius:2px 2px 0 0"></div>
<div class="abs" style="left:1374px;top:63px;width:3px;height:837px;background:#2c2c2c"></div>
<div class="abs" style="left:1377px;top:75px;width:223px;height:17px;background:#3e3e3e;border-bottom:1px solid #333"></div>
<div class="abs" style="left:1377px;top:75px;width:42px;height:18px;background:#535353;border-right:1px solid #333"></div>
<div class="abs" style="left:1377px;top:119px;width:223px;height:1px;background:#3c3c3c"></div>
<div class="abs" style="left:1377px;top:120px;width:223px;height:1px;background:#5f5f5f"></div>
<div class="abs" style="left:1377px;top:148px;width:223px;height:1px;background:#3c3c3c"></div>
<div class="abs" style="left:1377px;top:149px;width:223px;height:1px;background:#5f5f5f"></div>
<div class="abs" style="left:1377px;top:177px;width:207px;height:704px;background:#464646;border-top:1px solid #3a3a3a"></div>
<div class="abs" style="left:1584px;top:177px;width:16px;height:704px;background:#4b4b4b;border-left:1px solid #404040"></div>
<div class="abs" style="left:1598px;top:177px;width:2px;height:704px;background:#3e3e3e"></div>
<div class="abs" style="left:1377px;top:178px;width:207px;height:38px;background:#535353"></div>
<div class="abs" style="left:1377px;top:216px;width:207px;height:1px;background:#3a3a3a"></div>
<div class="abs" style="left:1407px;top:178px;width:1px;height:38px;background:#3f3f3f"></div>
<div class="abs" style="left:1377px;top:217px;width:207px;height:38px;background:#535353"></div>
<div class="abs" style="left:1377px;top:255px;width:207px;height:1px;background:#3a3a3a"></div>
<div class="abs" style="left:1407px;top:217px;width:1px;height:38px;background:#3f3f3f"></div>
<div class="abs" style="left:1377px;top:256px;width:207px;height:38px;background:#535353"></div>
<div class="abs" style="left:1377px;top:294px;width:207px;height:1px;background:#3a3a3a"></div>
<div class="abs" style="left:1407px;top:256px;width:1px;height:38px;background:#3f3f3f"></div>
<div class="abs" style="left:1377px;top:295px;width:207px;height:38px;background:#535353"></div>
<div class="abs" style="left:1408px;top:295px;width:176px;height:38px;background:#596678"></div>
<div class="abs" style="left:1377px;top:333px;width:207px;height:1px;background:#3a3a3a"></div>
<div class="abs" style="left:1407px;top:295px;width:1px;height:38px;background:#3f3f3f"></div>
<div class="abs" style="left:1377px;top:334px;width:207px;height:38px;background:#535353"></div>
<div class="abs" style="left:1377px;top:372px;width:207px;height:1px;background:#3a3a3a"></div>
<div class="abs" style="left:1407px;top:334px;width:1px;height:38px;background:#3f3f3f"></div>
<div class="abs" style="left:1377px;top:373px;width:207px;height:38px;background:#535353"></div>
<div class="abs" style="left:1377px;top:411px;width:207px;height:1px;background:#3a3a3a"></div>
<div class="abs" style="left:1407px;top:373px;width:1px;height:38px;background:#3f3f3f"></div>
<div class="abs" style="left:1377px;top:881px;width:223px;height:19px;background:#535353;border-top:1px solid #333"></div>
<svg class="abs" style="left:0;top:0" width="1600" height="900" viewBox="0 0 1600 900">

<defs>
<radialGradient id="orb" cx="0.5" cy="0.35" r="0.75"><stop offset="0" stop-color="#7fb4e6"/><stop offset="0.45" stop-color="#2f6fb5"/><stop offset="0.8" stop-color="#14457f"/><stop offset="1" stop-color="#0e3566"/></radialGradient>
<radialGradient id="orbglow" cx="0.5" cy="1" r="0.6"><stop offset="0" stop-color="#4fe0ff" stop-opacity="0.95"/><stop offset="1" stop-color="#4fe0ff" stop-opacity="0"/></radialGradient>
<linearGradient id="orbhi" x1="0" y1="0" x2="0" y2="1"><stop offset="0" stop-color="#fff" stop-opacity="0.75"/><stop offset="1" stop-color="#fff" stop-opacity="0.05"/></linearGradient>
<linearGradient id="btn" x1="0" y1="0" x2="1" y2="1"><stop offset="0" stop-color="#8a9bb0"/><stop offset="0.35" stop-color="#566d88"/><stop offset="0.7" stop-color="#34506f"/><stop offset="1" stop-color="#2b4a6c"/></linearGradient>
<linearGradient id="btnA" x1="0" y1="0" x2="1" y2="1"><stop offset="0" stop-color="#7389a3"/><stop offset="0.4" stop-color="#3f5b7c"/><stop offset="1" stop-color="#244668"/></linearGradient>
<linearGradient id="gradtool" x1="0" y1="0" x2="1" y2="1"><stop offset="0" stop-color="#d8d8d8"/><stop offset="1" stop-color="#4a4a4a"/></linearGradient>
<linearGradient id="ctl" x1="0" y1="0" x2="0" y2="1"><stop offset="0" stop-color="#6e6e6e"/><stop offset="1" stop-color="#595959"/></linearGradient>
</defs>
<circle cx="31" cy="27.5" r="18.6" fill="#0b2a52" stroke="#5f86b4" stroke-width="1.2"/>
<circle cx="31" cy="27.5" r="17.6" fill="url(#orb)"/>
<ellipse cx="31" cy="39" rx="14" ry="8" fill="url(#orbglow)"/>
<path d="M15 22 A16.5 16.5 0 0 1 47 22 Q31 30 15 22Z" fill="url(#orbhi)" opacity="0.55"/>
<path d="M23.5 19.5 Q27 17.2 30.6 19.2 L29 26.2 Q25.6 24.4 21.8 26.6Z" fill="#f0582a"/>
<path d="M32 19.8 Q35.6 22 39.6 19.8 L37.8 26.8 Q34 29 30.4 26.8Z" fill="#8cc43c"/>
<path d="M21.4 28 Q25.2 25.8 28.6 27.8 L27 34.6 Q23.6 32.6 19.8 34.8Z" fill="#3d9de0"/>
<path d="M30 28.4 Q33.6 30.6 37.4 28.4 L35.8 35.2 Q32 37.4 28.4 35.2Z" fill="#fbc31c"/>
<rect x="3.5" y="79.5" width="56" height="43" rx="2.5" fill="url(#btn)" stroke="#9fb2c8" stroke-width="1" opacity="0.9"/>
<rect x="1.5" y="79.5" width="54" height="43" rx="2.5" fill="url(#btn)" stroke="#aebfd2" stroke-width="1"/>
<rect x="1.5" y="127.5" width="58" height="43" rx="2.5" fill="url(#btnA)" stroke="#9fb2c8" stroke-width="1"/>
<rect x="1.5" y="175.5" width="58" height="43" rx="2.5" fill="url(#btnA)" stroke="#9fb2c8" stroke-width="1"/>
<rect x="1.5" y="223.5" width="58" height="43" rx="2.5" fill="url(#btnA)" stroke="#9fb2c8" stroke-width="1"/>
<path d="M13 90 h10 l2 2 h18 v22 h-30z" fill="#e8c765" stroke="#b8923a" stroke-width="0.7"/>
<rect x="15" y="88.5" width="6" height="2" fill="#3bb54a"/><rect x="23" y="90" width="6" height="2" fill="#e8442e"/><rect x="31" y="91" width="6" height="2" fill="#2f8fe0"/>
<path d="M12.5 96 h31 v18 h-31z" fill="#f5dc8a" stroke="#c9a548" stroke-width="0.7"/>
<path d="M16 103 h24 v11 h-5 v-6 h-14 v6 h-5z" fill="#8fd0f5" stroke="#4aa3e0" stroke-width="0.8"/>
<rect x="18" y="104.5" width="20" height="2.5" fill="#d6f0ff" opacity=".9"/>
<rect x="17.5" y="134.5" width="27" height="25" fill="#0b1050" stroke="#8ec4ff" stroke-width="1.6"/>
<text x="31" y="153" font-family="Liberation Sans, sans-serif" font-weight="bold" font-size="15" fill="#8ec4ff" text-anchor="middle">Ps</text>
<circle cx="30.5" cy="196.5" r="14" fill="#dd4b39"/>
<path d="M30.5 196.5 L42.624 189.5 A14 14 0 0 1 25.0 209.8 Z" fill="#f7c81a"/>
<path d="M30.5 196.5 L18.375999999999998 189.5 A14 14 0 0 0 25.0 209.8 Z" fill="#3fa547"/>
<path d="M30.5 196.5 L18.375999999999998 189.5 A14 14 0 0 1 42.624 189.5 Z" fill="#dd4b39"/>
<circle cx="30.5" cy="196.5" r="6.4" fill="#f4f4f4"/><circle cx="30.5" cy="196.5" r="5" fill="#4a8be8"/>
<path d="M25 232 L44 236 L42 257 L17 252 Z" fill="#e9f2f7" stroke="#9ab" stroke-width="0.6"/>
<path d="M25 233 L40 236.5 L37 254 L17 250.5 Z" fill="#6cc0e0"/>
<path d="M25 233 L40 236.5 L39 242 L22 239 Z" fill="#a9e0f2"/>
<path d="M43.5 237 L45 238 L43.5 256 L42 257Z" fill="#c8923a"/>
<path d="M26 231 L44 235" stroke="#888" stroke-width="1.6" stroke-dasharray="1 1.2"/>
<path d="M11.5 824 l5 4 l-5 4z" fill="#fff"/>
<rect x="35" y="820.5" width="11" height="14" fill="#7cc3ee" stroke="#4a9cd6" stroke-width=".6"/><rect x="37" y="823" width="3" height="3" fill="#e8442e"/><rect x="40.5" y="823" width="3" height="3" fill="#6cbf3c"/><rect x="37" y="826.5" width="3" height="3" fill="#2f7fe0"/><rect x="40.5" y="826.5" width="3" height="3" fill="#f7c81a"/><ellipse cx="40" cy="829" rx="7.5" ry="3.4" fill="none" stroke="#f3a21b" stroke-width="1.3" transform="rotate(-25 40 829)"/>
<rect x="1.5" y="877.5" width="59" height="21" fill="url(#btnA)" stroke="#6f8db0" stroke-width="1"/>
<path d="M1495.5 0 v14 q0 4 4 4 h94 q4 0 4 -4 v-14" fill="#565656" stroke="#474747" stroke-width="1"/>
<path d="M1522.5 0 v18 M1549.500 0 v18" stroke="#474747" stroke-width="1"/>
<rect x="1504" y="9.5" width="10" height="3" fill="#a0a0a0"/>
<path d="M1533.5 6.500 h7 v5 h-7z M1530.500 9 h7 v5 h-7z" fill="#565656" stroke="#a0a0a0" stroke-width="1.6"/>
<path d="M1568.500 5.500 l8 8 M1576.500 5.500 l-8 8" stroke="#a0a0a0" stroke-width="2.4"/>
<rect x="66" y="37" width="4" height="1" fill="#3a3a3a"/>
<rect x="66" y="39" width="4" height="1" fill="#3a3a3a"/>
<rect x="66" y="41" width="4" height="1" fill="#3a3a3a"/>
<rect x="66" y="43" width="4" height="1" fill="#3a3a3a"/>
<rect x="66" y="45" width="4" height="1" fill="#3a3a3a"/>
<rect x="66" y="47" width="4" height="1" fill="#3a3a3a"/>
<rect x="66" y="49" width="4" height="1" fill="#3a3a3a"/>
<rect x="66" y="51" width="4" height="1" fill="#3a3a3a"/>
<rect x="66" y="53" width="4" height="1" fill="#3a3a3a"/>
<rect x="66" y="55" width="4" height="1" fill="#3a3a3a"/>
<path d="M84.5 37.5 v10.500 l7.500 -4.200z" fill="#c8c8c8"/>
<path d="M93.3 45.7 h7.600 M97.1 41.900000000000006 v7.600" stroke="#c8c8c8" stroke-width="1"/>
<path d="M101.69999999999999 45.7 L99.49999999999999 47.5 L99.49999999999999 43.900000000000006Z" fill="#c8c8c8"/>
<path d="M92.5 45.7 L94.7 43.900000000000006 L94.7 47.5Z" fill="#c8c8c8"/>
<path d="M97.1 50.300000000000004 L98.89999999999999 48.1 L95.3 48.1Z" fill="#c8c8c8"/>
<path d="M97.1 41.1 L95.3 43.300000000000004 L98.89999999999999 43.300000000000004Z" fill="#c8c8c8"/>
<path d="M110.500 43 h6 l-3 3.200z" fill="#d8d8d8"/>
<path d="M122.500 34 v23" stroke="#404040"/><path d="M123.500 34 v23" stroke="#626262"/>
<rect x="130.500" y="38.500" width="13" height="12" rx="1.500" fill="#6a6a6a" stroke="#2e2e2e"/>
<path d="M133 43.500 l3.400 4.500 l7 -10.500" fill="none" stroke="#f4f4f4" stroke-width="1.700"/>
<rect x="216.500" y="35.500" width="55" height="19" rx="3" fill="url(#ctl)" stroke="#2e2e2e"/>
<path d="M262.500 42.500 h5 l-2.500 -3.500z M262.500 46.500 h5 l-2.500 3.500z" fill="#ececec"/>
<path d="M282.500 34 v23" stroke="#404040"/><path d="M283.500 34 v23" stroke="#626262"/>
<rect x="292.500" y="38.500" width="12" height="12" rx="1.500" fill="#6a6a6a" stroke="#2e2e2e"/>
<path d="M437.500 34 v23" stroke="#404040"/><path d="M438.500 34 v23" stroke="#626262"/>
<path d="M451 38.5 h14" stroke="#8c8c8c" stroke-width="1"/><rect x="452.5" y="40.5" width="4" height="10" fill="none" stroke="#8c8c8c"/><rect x="459" y="40" width="4" height="6" fill="#8c8c8c"/>
<path d="M474 44.5 h14" stroke="#8c8c8c"/><rect x="476.5" y="39" width="4" height="11" fill="#535353" stroke="#8c8c8c"/><rect x="483" y="41.5" width="5" height="6" fill="#8c8c8c"/>
<path d="M499 50.5 h14" stroke="#8c8c8c"/><rect x="500.5" y="38.5" width="4" height="10" fill="none" stroke="#8c8c8c"/><rect x="507" y="43" width="4" height="6" fill="#8c8c8c"/>
<path d="M530.5 38 v13" stroke="#8c8c8c"/><rect x="532" y="39" width="6" height="4" fill="#8c8c8c"/><rect x="532.5" y="45.5" width="10" height="4" fill="none" stroke="#8c8c8c"/>
<path d="M560.5 38 v13" stroke="#8c8c8c"/><rect x="557.5" y="39.5" width="6" height="4" fill="#8c8c8c"/><rect x="555.5" y="45.5" width="10" height="4" fill="#535353" stroke="#8c8c8c"/>
<path d="M590.5 38 v13" stroke="#8c8c8c"/><rect x="583" y="39" width="6" height="4" fill="#8c8c8c"/><rect x="578.5" y="45.5" width="10" height="4" fill="none" stroke="#8c8c8c"/>
<path d="M618 39.5 h16 M618 45.5 h16" stroke="#8c8c8c"/><rect x="622.5" y="40.0" width="7" height="3" fill="#8c8c8c"/><rect x="621.5" y="46.5" width="9" height="3" fill="none" stroke="#8c8c8c"/>
<path d="M643 40.5 h16 M643 46.5 h16" stroke="#8c8c8c"/><rect x="647.5" y="41.0" width="7" height="3" fill="#8c8c8c"/><rect x="646.5" y="47.5" width="9" height="3" fill="none" stroke="#8c8c8c"/>
<path d="M667 41.5 h16 M667 47.5 h16" stroke="#8c8c8c"/><rect x="671.5" y="42.0" width="7" height="3" fill="#8c8c8c"/><rect x="670.5" y="48.5" width="9" height="3" fill="none" stroke="#8c8c8c"/>
<path d="M701.5 37 v15.500 M707.5 37 v15.500" stroke="#8c8c8c"/><rect x="702.5" y="39.5" width="4" height="10" fill="#535353" stroke="#8c8c8c"/><rect x="708" y="41.5" width="4" height="6" fill="#8c8c8c"/>
<path d="M727.5 37 v15.500 M733.5 37 v15.500" stroke="#8c8c8c"/><rect x="725.5" y="39.5" width="4" height="10" fill="#535353" stroke="#8c8c8c"/><rect x="731" y="41.5" width="4" height="6" fill="#8c8c8c"/>
<path d="M753.5 37 v15.500 M759.5 37 v15.500" stroke="#8c8c8c"/><rect x="748.5" y="39.5" width="4" height="10" fill="#535353" stroke="#8c8c8c"/><rect x="754" y="41.5" width="4" height="6" fill="#8c8c8c"/>
<path d="M606.500 34 v23" stroke="#404040"/><path d="M607.500 34 v23" stroke="#626262"/>
<path d="M775.500 34 v23" stroke="#404040"/><path d="M776.500 34 v23" stroke="#626262"/>
<rect x="788" y="37" width="5" height="5" fill="#8c8c8c"/><rect x="788.500" y="43.500" width="4" height="9" fill="none" stroke="#8c8c8c"/><rect x="797.500" y="37" width="5" height="5" fill="#8c8c8c"/><rect x="798" y="43.500" width="4" height="9" fill="none" stroke="#8c8c8c"/>
<path d="M816.500 34 v23" stroke="#404040"/><path d="M817.500 34 v23" stroke="#626262"/>
<rect x="1472.500" y="36.500" width="119" height="18" rx="3" fill="url(#ctl)" stroke="#2e2e2e"/>
<path d="M1582.500 43.500 h5 l-2.500 -3.500z M1582.500 47.500 h5 l-2.500 3.500z" fill="#ececec"/>

<path d="M67.500 65.500 l3.200 2.800 l-3.200 2.800z M71.700 65.500 l3.200 2.800 l-3.200 2.800z" fill="#d0d0d0"/>
<rect x="72" y="79" width="1" height="3" fill="#333"/>
<rect x="74" y="79" width="1" height="3" fill="#333"/>
<rect x="76" y="79" width="1" height="3" fill="#333"/>
<rect x="78" y="79" width="1" height="3" fill="#333"/>
<rect x="80" y="79" width="1" height="3" fill="#333"/>
<rect x="82" y="79" width="1" height="3" fill="#333"/>
<rect x="84" y="79" width="1" height="3" fill="#333"/>
<rect x="86" y="79" width="1" height="3" fill="#333"/>
<rect x="88" y="79" width="1" height="3" fill="#333"/>
<rect x="90" y="79" width="1" height="3" fill="#333"/>
<rect x="66.500" y="91.500" width="30" height="22.500" rx="2.500" fill="#383838" stroke="#2c2c2c"/>
<path d="M73 96.500 v10.500 l7.600 -4.600z" fill="#c4c4c4"/>
<path d="M81.600 104.200 h7.600 M85.400 100.400 v7.600" stroke="#c4c4c4" stroke-width="1"/>
<path d="M90.0 104.2 L87.8 106.0 L87.8 102.4Z" fill="#c4c4c4"/>
<path d="M80.80000000000001 104.2 L83.00000000000001 102.4 L83.00000000000001 106.0Z" fill="#c4c4c4"/>
<path d="M85.4 108.8 L87.2 106.6 L83.60000000000001 106.6Z" fill="#c4c4c4"/>
<path d="M85.4 99.60000000000001 L83.60000000000001 101.80000000000001 L87.2 101.80000000000001Z" fill="#c4c4c4"/>
<ellipse cx="81" cy="129" rx="8" ry="6.600" fill="none" stroke="#c4c4c4" stroke-width="1.100" stroke-dasharray="3 1.600"/>
<path d="M93.200 135.5 v3.200 h-3.200z" fill="#d8d8d8"/>
<path d="M73.800 149.600 L80.200 153.300 L87.500 147.800 L86.500 157 L79.300 158.700Z M79.300 158.700 l-2 1.500 l1.500 2 M76.500 154 l3 4.500" fill="none" stroke="#c4c4c4" stroke-width="1.200"/>
<path d="M93.200 161.5 v3.200 h-3.200z" fill="#d8d8d8"/>
<path d="M81 180.500 L89.500 188.500" stroke="#c4c4c4" stroke-width="1.800"/>
<path d="M78.400 171.500 l1 4.300 l3.800 -2.500 l-2.300 3.700 l4.400 0.800 l-4.400 1 l2.300 3.700 l-3.800 -2.400 l-1 4.400 l-1 -4.400 l-3.800 2.400 l2.300 -3.700 l-4.300 -1 l4.300 -.8 l-2.300 -3.700 l3.800 2.500z" fill="#c4c4c4"/>
<path d="M93.200 187.5 v3.200 h-3.200z" fill="#d8d8d8"/>
<path d="M76.500 198 v12.500 h12.500 M73 201.500 h12.500 v12.500" fill="none" stroke="#c4c4c4" stroke-width="1.800"/><path d="M78.500 208.500 L88 199" stroke="#c4c4c4" stroke-width="1"/>
<path d="M93.200 213.5 v3.200 h-3.200z" fill="#d8d8d8"/>
<path d="M74.600 239 l1.200 -3.500 l6.500 -6.500 l2.300 2.300 l-6.500 6.500z" fill="none" stroke="#c4c4c4" stroke-width="1.100"/><path d="M82 227.500 l4 4 M83.600 229.700 l2.500 -3 q2 -1.500 3 0 q1.200 1.200 0 2.800 l-3 2.600z" fill="#c4c4c4" stroke="#c4c4c4" stroke-width="1.200"/>
<path d="M93.200 239.5 v3.200 h-3.200z" fill="#d8d8d8"/>
<path d="M67 247.500 h29" stroke="#3e3e3e"/>
<rect x="76" y="258" width="15" height="7" rx="3.500" fill="#c4c4c4" transform="rotate(-38 83.5 261.500)"/>
<path d="M78 256 q-5 1 -5 6 q0 5 5 5.500" fill="none" stroke="#c4c4c4" stroke-width="1" stroke-dasharray="1 1.300"/>
<rect x="81.500" y="259.500" width="4" height="4" fill="#6a6a6a" transform="rotate(-38 83.5 261.500)"/>
<path d="M93.200 269 v3.200 h-3.200z" fill="#d8d8d8"/>
<path d="M90 280 L82 289.500" stroke="#c4c4c4" stroke-width="2"/><path d="M73.500 294 q4 1.500 7.500 -1 q2.500 -2.500 0.500 -4.500 q-3 -1.200 -4.500 1.500 q-1 3 -3.500 4z" fill="#c4c4c4"/>
<path d="M93.200 294.5 v3.200 h-3.200z" fill="#d8d8d8"/>
<path d="M78.500 311 q-2 -3 0 -5 q2.500 -1.800 5 0 q2 2 0 5 l0 2.500 h5 v3.500 h-15 v-3.500 h5z" fill="#c4c4c4"/><rect x="73.500" y="319" width="15" height="2" fill="#c4c4c4"/>
<path d="M93.200 320.5 v3.200 h-3.200z" fill="#d8d8d8"/>
<path d="M90 333 L83.500 341.500" stroke="#c4c4c4" stroke-width="2"/><path d="M75 346.500 q3.500 1.500 7 -1 q2.500 -2.500 0.500 -4.500 q-3 -1 -4.500 1.500 q-0.800 3 -3 4z" fill="#c4c4c4"/><path d="M75 337 q3 -4 8 -2.500" fill="none" stroke="#c4c4c4" stroke-width="1.400"/><path d="M73.500 334 l0.500 4.800 l4.400 -1.500z" fill="#c4c4c4"/><path d="M87 339 q3 3 0 7" fill="none" stroke="#c4c4c4" stroke-width="0.900" stroke-dasharray="1 1"/>
<path d="M93.200 346.5 v3.200 h-3.200z" fill="#d8d8d8"/>
<path d="M74 368.500 l6 -7.500 h10 l-6 7.500z" fill="#d4d4d4"/><path d="M74 368.500 h10 v3.500 h-10z" fill="#9a9a9a"/><path d="M84 368.500 l6 -7.500 v3.500 l-6 7.500z" fill="#b4b4b4"/>
<path d="M93.200 372.5 v3.200 h-3.200z" fill="#d8d8d8"/>
<rect x="73.500" y="385.500" width="15" height="12" fill="url(#gradtool)" stroke="#c4c4c4" stroke-width="1"/>
<path d="M93.200 398.5 v3.200 h-3.200z" fill="#d8d8d8"/>
<path d="M81 409.500 q6 8 5.500 11 q-.5 4.500 -5.500 4.500 q-5 0 -5.500 -4.500 q-.5 -3 5.500 -11z" fill="#c4c4c4"/>
<path d="M93.200 424.5 v3.200 h-3.200z" fill="#d8d8d8"/>
<circle cx="79.500" cy="440" r="4.800" fill="#c4c4c4"/><path d="M82.500 443.500 l6.500 7" stroke="#c4c4c4" stroke-width="2"/>
<path d="M93.200 450.5 v3.200 h-3.200z" fill="#d8d8d8"/>
<path d="M67 458.500 h29" stroke="#3e3e3e"/>
<path d="M73.500 480 l2.500 -9 l7.500 -4.500 l5.500 5.500 l-5 7z" fill="#c4c4c4"/><path d="M84 464.500 l6 6 l1.600 -1.600 l-6 -6z" fill="#c4c4c4"/><path d="M74 479.500 l6 -5.500" stroke="#535353" stroke-width="1"/><circle cx="80.500" cy="473.500" r="1.300" fill="#535353"/>
<path d="M93.200 476.5 v3.200 h-3.200z" fill="#d8d8d8"/>
<path d="M93.200 502.5 v3.200 h-3.200z" fill="#d8d8d8"/>
<path d="M76.500 516.500 v15 l3.600 -3.400 l2.600 5.600 l2.400 -1.100 l-2.600 -5.500 h5z" fill="#1e1e1e" stroke="#d8d8d8" stroke-width="1"/>
<path d="M93.200 528.5 v3.200 h-3.200z" fill="#d8d8d8"/>
<path d="M74 558.500 L88 544.500" stroke="#c4c4c4" stroke-width="1.300"/>
<path d="M93.200 554.5 v3.200 h-3.200z" fill="#d8d8d8"/>
<path d="M67 565.500 h29" stroke="#3e3e3e"/>
<path d="M76.500 588 q-3.500 -4.500 -4 -6.500 q.6 -1.600 2.400 -.2 l1.800 2.200 v-7.500 q.9 -1.500 1.800 0 v-2 q1 -1.500 2 0 v1 q1 -1.400 2 0 v1.500 q1 -1.300 2 0 l.5 6 q.5 3.500 -1.500 5.800z" fill="#c4c4c4"/><path d="M78.500 576 v5 M80.500 574.500 v6.500 M82.500 575.500 v5.500 M84.500 577 v4.500" stroke="#6a6a6a" stroke-width=".7"/>
<path d="M93.200 583.5 v3.200 h-3.200z" fill="#d8d8d8"/>
<circle cx="79.500" cy="602.500" r="5" fill="#8e8e8e" stroke="#c4c4c4" stroke-width="1.500"/><path d="M83.500 606.500 l5 5" stroke="#c4c4c4" stroke-width="2.400" stroke-linecap="round"/>
<rect x="69.500" y="625.500" width="6" height="6" fill="#a0a0a0" stroke="#d0d0d0" stroke-width=".6"/><rect x="66.500" y="622.500" width="6" height="6" fill="#1a1a1a" stroke="#d0d0d0" stroke-width=".8"/>
<path d="M86 624 h5 v5" fill="none" stroke="#c4c4c4" stroke-width="1.300"/><path d="M84.500 624 l3 -2.600 v5.200z M91 631 l-2.600 -3 h5.200z" fill="#c4c4c4"/>
<rect x="77" y="647.500" width="18" height="18" fill="#00ffcc" stroke="#f4f4f4" stroke-width="1"/>
<rect x="66" y="637.500" width="20" height="20" fill="#2a2a2a"/><rect x="67" y="638.500" width="18" height="18" fill="#fff200" stroke="#f4f4f4" stroke-width="1"/>
<rect x="72.500" y="675.500" width="16" height="12" fill="#3a3a3a" stroke="#c4c4c4" stroke-width="1"/><circle cx="80.500" cy="681.500" r="3.600" fill="none" stroke="#e0e0e0" stroke-width="1" stroke-dasharray="1 1.200"/>
<rect x="77.500" y="702.500" width="11" height="9" fill="#6a6a6a" stroke="#c4c4c4" stroke-width="1.200"/><rect x="72.500" y="706.500" width="11" height="8" fill="#535353" stroke="#c4c4c4" stroke-width="1.200"/>
<path d="M93.200 715 v3.200 h-3.200z" fill="#d8d8d8"/>
<path d="M321 69.500 l5 5 M326 69.500 l-5 5" stroke="#e4e4e4" stroke-width="1.200"/>
<path d="M103 97.500 h15 M117.500 83 v15" stroke="#7a7a7a" stroke-dasharray="1 1"/>
<path d="M135.5 83v15M144.5 95v3M153.5 93v5M161.5 95v3M170.5 83v15M179.5 95v3M187.5 93v5M196.5 95v3M204.5 83v15M213.5 95v3M222.5 93v5M230.5 95v3M239.5 83v15M248.5 95v3M256.5 93v5M265.5 95v3M274.5 83v15M282.5 95v3M291.5 93v5M300.5 95v3M308.5 83v15M317.5 95v3M326.5 93v5M334.5 95v3M343.5 83v15M352.5 95v3M360.5 93v5M369.5 95v3M378.5 83v15M386.5 95v3M395.5 93v5M403.5 95v3M412.5 83v15M421.5 95v3M429.5 93v5M438.5 95v3M447.5 83v15M455.5 95v3M464.5 93v5M473.5 95v3M481.5 83v15M490.5 95v3M499.5 93v5M507.5 95v3M516.5 83v15M525.5 95v3M533.5 93v5M542.5 95v3M550.5 83v15M559.5 95v3M568.5 93v5M576.5 95v3M585.5 83v15M594.5 95v3M602.5 93v5M611.5 95v3M620.5 83v15M628.5 95v3M637.5 93v5M646.5 95v3M654.5 83v15M663.5 95v3M672.5 93v5M680.5 95v3M689.5 83v15M698.5 95v3M706.5 93v5M715.5 95v3M724.5 83v15M732.5 95v3M741.5 93v5M749.5 95v3M758.5 83v15M767.5 95v3M775.5 93v5M784.5 95v3M793.5 83v15M801.5 95v3M810.5 93v5M819.5 95v3M827.5 83v15M836.5 95v3M845.5 93v5M853.5 95v3M862.5 83v15M871.5 95v3M879.5 93v5M888.5 95v3M896.5 83v15M905.5 95v3M914.5 93v5M922.5 95v3M931.5 83v15M940.5 95v3M948.5 93v5M957.5 95v3M966.5 83v15M974.5 95v3M983.5 93v5M992.5 95v3M1000.5 83v15M1009.5 95v3M1018.5 93v5M1026.5 95v3M1035.5 83v15M1044.5 95v3M1052.5 93v5M1061.5 95v3M1070.5 83v15M1078.5 95v3M1087.5 93v5M1095.5 95v3M1104.5 83v15M1113.5 95v3M1121.5 93v5M1130.5 95v3M1139.5 83v15M1147.5 95v3M1156.5 93v5M1165.5 95v3M1173.5 83v15M1182.5 95v3M1191.5 93v5M1199.5 95v3M1208.5 83v15M1217.5 95v3M1225.5 93v5M1234.5 95v3M1242.5 83v15M1251.5 95v3M1260.5 93v5M1268.5 95v3M1277.5 83v15M1286.5 95v3M1294.5 93v5M1303.5 95v3M1312.5 83v15M1320.5 95v3M1329.5 93v5M1338.5 95v3M1346.5 83v15M1355.5 95v3" stroke="#8a8a8a" stroke-width="1"/>
<path d="M113 110.5h5M115 119.5h3M103 127.5h15M115 136.5h3M113 145.5h5M115 153.5h3M103 162.5h15M115 171.5h3M113 179.5h5M115 188.5h3M103 196.5h15M115 205.5h3M113 214.5h5M115 222.5h3M103 231.5h15M115 240.5h3M113 248.5h5M115 257.5h3M103 266.5h15M115 274.5h3M113 283.5h5M115 292.5h3M103 300.5h15M115 309.5h3M113 318.5h5M115 326.5h3M103 335.5h15M115 344.5h3M113 352.5h5M115 361.5h3M103 370.5h15M115 378.5h3M113 387.5h5M115 395.5h3M103 404.5h15M115 413.5h3M113 421.5h5M115 430.5h3M103 439.5h15M115 447.5h3M113 456.5h5M115 465.5h3M103 473.5h15M115 482.5h3M113 491.5h5M115 499.5h3M103 508.5h15M115 517.5h3M113 525.5h5M115 534.5h3M103 542.5h15M115 551.5h3M113 560.5h5M115 568.5h3M103 577.5h15M115 586.5h3M113 594.5h5M115 603.5h3M103 612.5h15M115 620.5h3M113 629.5h5M115 638.5h3M103 646.5h15M115 655.5h3M113 664.5h5M115 672.5h3M103 681.5h15M115 690.5h3M113 698.5h5M115 707.5h3M103 716.5h15M115 724.5h3M113 733.5h5M115 741.5h3M103 750.5h15M115 759.5h3M113 767.5h5M115 776.5h3M103 785.5h15M115 793.5h3M113 802.5h5M115 811.5h3M103 819.5h15M115 828.5h3M113 837.5h5M115 845.5h3M103 854.5h15M115 863.5h3M113 871.5h5M115 880.5h3" stroke="#8a8a8a" stroke-width="1"/>
<circle cx="163" cy="891.5" r="5.500" fill="#8a8a8a"/><path d="M160.500 888.500 h3 l2 2 v3.500 h-5z" fill="#e0e0e0"/>
<path d="M348.500 886.500 v9 l6 -4.500z" fill="#f0f0f0"/>
<path d="M1015 152.800 l3.300 2.800 l-3.300 2.800z M1019 152.800 l3.300 2.800 l-3.300 2.800z" fill="#d8d8d8"/><path d="M1032.300 152.800 l5.600 5.400 M1037.900 152.800 l-5.600 5.400" stroke="#e4e4e4" stroke-width="1.700"/>
<rect x="1015" y="166" width="1" height="3" fill="#333"/>
<rect x="1017" y="166" width="1" height="3" fill="#333"/>
<rect x="1019" y="166" width="1" height="3" fill="#333"/>
<rect x="1021" y="166" width="1" height="3" fill="#333"/>
<rect x="1023" y="166" width="1" height="3" fill="#333"/>
<rect x="1025" y="166" width="1" height="3" fill="#333"/>
<rect x="1027" y="166" width="1" height="3" fill="#333"/>
<rect x="1029" y="166" width="1" height="3" fill="#333"/>
<rect x="1031" y="166" width="1" height="3" fill="#333"/>
<rect x="1033" y="166" width="1" height="3" fill="#333"/>
<path d="M1031.500 176 v17.600" stroke="#c4c4c4" stroke-width="1.200"/>

<path d="M1588 66 l3 2.500 l-3 2.500z M1592 66 l3 2.500 l-3 2.500z" fill="#d0d0d0"/>
<path d="M1581 81 h5 l-2.500 3z" fill="#d0d0d0"/><path d="M1587 80.500 h8 M1587 82.500 h8 M1587 84.500 h8 M1587 86.500 h8" stroke="#d0d0d0" stroke-width="1"/>
<rect x="1382.500" y="97.500" width="68" height="18" rx="3" fill="url(#ctl)" stroke="#2e2e2e"/>
<circle cx="1393" cy="103.500" r="2.800" fill="none" stroke="#d8d8d8" stroke-width="1.300"/><path d="M1391 106 l-3 3.500" stroke="#d8d8d8" stroke-width="1.500"/>
<path d="M1441 104.500 h5 l-2.500 -3.500z M1441 108.500 h5 l-2.500 3.500z" fill="#ececec"/>
<rect x="1463.500" y="100.500" width="12" height="10" fill="none" stroke="#c4c4c4" stroke-width="1"/><path d="M1465 109 l3 -4 l2 2 l1.500 -1.500 l2.500 3.500z" fill="#c4c4c4"/><circle cx="1472.500" cy="103.500" r="1" fill="#c4c4c4"/>
<circle cx="1492.500" cy="105.500" r="5" fill="none" stroke="#c4c4c4" stroke-width="1.200"/><path d="M1489 109 A5 5 0 0 1 1496 102Z" fill="#c4c4c4"/>
<rect x="1537.500" y="101.500" width="8" height="8" fill="none" stroke="#c4c4c4" stroke-width="1"/>
<rect x="1536.0" y="100.0" width="3" height="3" fill="#535353" stroke="#c4c4c4" stroke-width=".9"/>
<rect x="1544.0" y="100.0" width="3" height="3" fill="#535353" stroke="#c4c4c4" stroke-width=".9"/>
<rect x="1536.0" y="108.0" width="3" height="3" fill="#535353" stroke="#c4c4c4" stroke-width=".9"/>
<rect x="1544.0" y="108.0" width="3" height="3" fill="#535353" stroke="#c4c4c4" stroke-width=".9"/>
<path d="M1563.500 100.500 h4 l3 3 v8 h-7z" fill="none" stroke="#c4c4c4" stroke-width="1"/><rect x="1560" y="106" width="5" height="6" fill="#c4c4c4"/>
<rect x="1585.500" y="97.500" width="8" height="16" rx="1" fill="#3a3a3a" stroke="#2e2e2e"/><rect x="1586" y="98" width="7" height="7" fill="#8a8a8a"/>
<rect x="1382.500" y="125.500" width="109" height="18" rx="3" fill="url(#ctl)" stroke="#2e2e2e"/>
<path d="M1482 132.500 h5 l-2.500 -3.500z M1482 136.500 h5 l-2.500 3.500z" fill="#ececec"/>
<rect x="1541.500" y="125.5" width="53" height="18" rx="2" fill="url(#ctl)" stroke="#2e2e2e"/>
<path d="M1543.500 126 h32 v17 h-32 q-1.500 0 -1.500 -1.500 v-14 q0 -1.500 1.500 -1.500z" fill="#3a3a3a"/>
<path d="M1582.500 133.5 h5.500 l-2.750 3.200z" fill="#ececec"/>
<rect x="1541.500" y="153.5" width="53" height="18" rx="2" fill="url(#ctl)" stroke="#2e2e2e"/>
<path d="M1543.500 154 h32 v17 h-32 q-1.500 0 -1.500 -1.500 v-14 q0 -1.500 1.500 -1.500z" fill="#3a3a3a"/>
<path d="M1582.500 161.5 h5.500 l-2.750 3.200z" fill="#ececec"/>
<rect x="1416.500" y="157.500" width="10" height="10" fill="#6a6a6a" stroke="#9a9a9a" stroke-width="1"/><rect x="1417" y="158" width="3" height="3" fill="#c4c4c4"/><rect x="1423" y="158" width="3" height="3" fill="#c4c4c4"/><rect x="1420" y="161" width="3" height="3" fill="#c4c4c4"/><rect x="1417" y="164" width="3" height="3" fill="#c4c4c4"/><rect x="1423" y="164" width="3" height="3" fill="#c4c4c4"/>
<path d="M1452 155.500 L1444.500 164" stroke="#c4c4c4" stroke-width="1.800"/><path d="M1436 168 q4 1.300 7 -1 q2.300 -2.300 .5 -4.200 q-3 -1 -4.300 1.500 q-.8 2.800 -3.200 3.700z" fill="#c4c4c4"/>
<path d="M1460.500 162.500 h11 M1466 157 v11" stroke="#c4c4c4" stroke-width="1.100"/>
<path d="M1472.3 162.5 L1469.7 164.7 L1469.7 160.3Z" fill="#c4c4c4"/>
<path d="M1459.7 162.5 L1462.3 160.3 L1462.3 164.7Z" fill="#c4c4c4"/>
<path d="M1466.0 168.8 L1468.2 166.20000000000002 L1463.8 166.20000000000002Z" fill="#c4c4c4"/>
<path d="M1466.0 156.2 L1463.8 158.79999999999998 L1468.2 158.79999999999998Z" fill="#c4c4c4"/>
<rect x="1483" y="161.500" width="9.500" height="6.500" rx="1" fill="#c4c4c4"/><path d="M1485 161.500 v-2 q0 -2.800 2.750 -2.800 q2.750 0 2.750 2.800 v2" fill="none" stroke="#c4c4c4" stroke-width="1.400"/><rect x="1487" y="163.500" width="1.500" height="2.500" fill="#535353"/>
<defs><pattern id="chk" x="1412" y="182" width="8" height="8" patternUnits="userSpaceOnUse"><rect width="8" height="8" fill="#fff"/><rect width="4" height="4" fill="#cfcfcf"/><rect x="4" y="4" width="4" height="4" fill="#cfcfcf"/></pattern><linearGradient id="l10" x1="0" y1="0" x2="0.7" y2="0.6"><stop offset="0" stop-color="#fdf48a"/><stop offset="0.45" stop-color="#fdf8b0" stop-opacity="0.6"/><stop offset="1" stop-color="#fff" stop-opacity="0"/></linearGradient><linearGradient id="l9" x1="0" y1="0" x2="0" y2="1"><stop offset="0.55" stop-color="#fff" stop-opacity="0"/><stop offset="0.95" stop-color="#fff" stop-opacity="1"/></linearGradient></defs>
<path d="M1385.600 196.5 q6.400 -8.600 12.800 0 q-6.400 8.600 -12.800 0z" fill="#b2b2b2"/><circle cx="1392" cy="196.5" r="3" fill="#3e3e3e"/><circle cx="1393" cy="195.5" r="0.900" fill="#d8d8d8"/>
<rect x="1411.500" y="181.5" width="23" height="31" fill="url(#chk)" stroke="#0c0c0c" stroke-width="1"/>
<path d="M1385.600 235.5 q6.400 -8.600 12.800 0 q-6.400 8.600 -12.800 0z" fill="#b2b2b2"/><circle cx="1392" cy="235.5" r="3" fill="#3e3e3e"/><circle cx="1393" cy="234.5" r="0.900" fill="#d8d8d8"/>
<rect x="1411.500" y="220.5" width="23" height="31" fill="url(#chk)" stroke="#0c0c0c" stroke-width="1"/>
<path d="M1419 223 l1 4 l-2 5 l2 6 M1422 222 l1 5 l-1 3 M1413.500 242 v5 l2 1" fill="none" stroke="#222" stroke-width=".8"/>
<path d="M1385.600 274.5 q6.400 -8.600 12.800 0 q-6.400 8.600 -12.800 0z" fill="#b2b2b2"/><circle cx="1392" cy="274.5" r="3" fill="#3e3e3e"/><circle cx="1393" cy="273.5" r="0.900" fill="#d8d8d8"/>
<rect x="1411.500" y="259.5" width="23" height="31" fill="url(#chk)" stroke="#0c0c0c" stroke-width="1"/>
<path d="M1417 263 q3 -2 5 0 q1.500 3 0 6 l-1 3 q2 2 1 6 l0 5 q3 2 5 5 l1 2.500 h-15.500 l.5 -8 q1 -8 3 -11 q-1 -5 1 -8.500z" fill="#e0b06f"/>
<path d="M1385.600 313.5 q6.400 -8.600 12.800 0 q-6.400 8.600 -12.800 0z" fill="#b2b2b2"/><circle cx="1392" cy="313.5" r="3" fill="#3e3e3e"/><circle cx="1393" cy="312.5" r="0.900" fill="#d8d8d8"/>
<rect x="1411.500" y="298.5" width="23" height="31" fill="url(#chk)" stroke="#0c0c0c" stroke-width="1"/>
<rect x="1412" y="299" width="22" height="30" fill="url(#l10)"/>
<path d="M1409.500 301.5 v-5 h5 M1431.500 296.5 h5 v5 M1436.500 326.5 v5 h-5 M1414.500 331.5 h-5 v-5" fill="none" stroke="#f4f4f4" stroke-width="1"/>
<path d="M1385.600 352.5 q6.400 -8.600 12.800 0 q-6.400 8.600 -12.800 0z" fill="#b2b2b2"/><circle cx="1392" cy="352.5" r="3" fill="#3e3e3e"/><circle cx="1393" cy="351.5" r="0.900" fill="#d8d8d8"/>
<rect x="1411.500" y="337.5" width="23" height="31" fill="url(#chk)" stroke="#0c0c0c" stroke-width="1"/>
<rect x="1412" y="338" width="22" height="30" fill="url(#l9)"/>
<path d="M1385.600 391.5 q6.400 -8.600 12.800 0 q-6.400 8.600 -12.800 0z" fill="#b2b2b2"/><circle cx="1392" cy="391.5" r="3" fill="#3e3e3e"/><circle cx="1393" cy="390.5" r="0.900" fill="#d8d8d8"/>
<rect x="1411.500" y="376.5" width="23" height="31" fill="#00ffcc" stroke="#0c0c0c" stroke-width="1"/>
<rect x="1557.500" y="391.5" width="9" height="7" rx="1" fill="none" stroke="#c8c8c8" stroke-width="1.100"/><path d="M1559.500 391.5 v-2 q0 -2.500 2.500 -2.500 q2.500 0 2.500 2.500 v2" fill="none" stroke="#c8c8c8" stroke-width="1.100"/><rect x="1561.300" y="393.5" width="1.500" height="2.500" fill="#c8c8c8"/>
<path d="M1402 887 h-2.500 a3 3 0 0 0 0 6 h2.500 M1404.500 887 h2.500 a3 3 0 0 1 0 6 h-2.500 M1400.500 890 h5.500" fill="none" stroke="#8c8c8c" stroke-width="1.500"/>
<path d="M1438 894 h3 l-1.500 2z" fill="#c4c4c4"/>
<rect x="1451" y="886" width="13" height="10" fill="#b0b0b0"/><circle cx="1457.500" cy="891" r="2.800" fill="#4a4a4a"/>
<circle cx="1484" cy="890.500" r="5" fill="none" stroke="#b0b0b0" stroke-width="1.300"/><path d="M1480.500 894 A5 5 0 0 1 1487.500 887Z" fill="#b0b0b0"/><path d="M1492 894 h3 l-1.500 2z" fill="#c4c4c4"/>
<path d="M1505 886 h5 l1.500 1.500 h6 v8 h-12.500z" fill="#b0b0b0"/>
<path d="M1533 886.500 h10 v10 h-6 l-4 -4z" fill="#b0b0b0"/><path d="M1533 892.500 h4 v4z" fill="#535353"/>
<path d="M1559.500 888.500 h10 M1562 888 q2.500 -3 5 0" fill="none" stroke="#b0b0b0" stroke-width="1.300"/><path d="M1560.500 890 h8 l-1 6.500 h-6z" fill="#b0b0b0"/><path d="M1563 891 v4.500 M1566 891 v4.500" stroke="#535353" stroke-width=".8"/>
</svg>
<span class="t" style="letter-spacing:-0.758px;left:23px;top:795px;font-size:12px;color:#fff;">ES</span>
<span class="t" style="letter-spacing:-0.408px;left:0px;top:844px;font-size:12.5px;color:#fff;width:62px;text-align:center;">01:25 p.m.</span>
<span class="t" style="letter-spacing:-0.356px;left:0px;top:861px;font-size:12.5px;color:#fff;width:62px;text-align:center;">17/05/2013</span>
<span class="t" style="left:69px;top:3px;font-size:21px;color:#6fa6dc;font-weight:bold;transform:scaleX(0.81);transform-origin:0 0;-webkit-text-stroke:0.5px #6fa6dc">Ps</span>
<span class="t" style="letter-spacing:-0.336px;left:108.7px;top:8px;font-size:12px;color:#f0f0f0;">File</span>
<span class="t" style="letter-spacing:-0.122px;left:144px;top:8px;font-size:12px;color:#f0f0f0;">Edit</span>
<span class="t" style="letter-spacing:0.068px;left:180px;top:8px;font-size:12px;color:#f0f0f0;">Image</span>
<span class="t" style="letter-spacing:-0.306px;left:230.7px;top:8px;font-size:12px;color:#f0f0f0;">Layer</span>
<span class="t" style="letter-spacing:0.121px;left:275.2px;top:8px;font-size:12px;color:#f0f0f0;">Type</span>
<span class="t" style="letter-spacing:-0.310px;left:319px;top:8px;font-size:12px;color:#f0f0f0;">Select</span>
<span class="t" style="letter-spacing:-0.029px;left:367.7px;top:8px;font-size:12px;color:#f0f0f0;">Filter</span>
<span class="t" style="letter-spacing:0.176px;left:410.2px;top:8px;font-size:12px;color:#f0f0f0;">View</span>
<span class="t" style="letter-spacing:0.419px;left:453.2px;top:8px;font-size:12px;color:#f0f0f0;">Window</span>
<span class="t" style="letter-spacing:0.128px;left:514.5px;top:8px;font-size:12px;color:#f0f0f0;">Help</span>
<span class="t" style="letter-spacing:-0.518px;left:148.5px;top:39px;font-size:11px;color:#f0f0f0;">Auto-Select:</span>
<span class="t" style="letter-spacing:-0.666px;left:224px;top:39px;font-size:11px;color:#f0f0f0;">Layer</span>
<span class="t" style="letter-spacing:-0.496px;left:310.5px;top:39px;font-size:11px;color:#f0f0f0;">Show Transform Controls</span>
<span class="t" style="letter-spacing:-0.399px;left:1480px;top:40px;font-size:11px;color:#f0f0f0;">Photography</span>
<span class="t" style="left:74px;top:487px;font-size:21px;color:#c4c4c4;font-family:Liberation Serif,serif;">T</span>
<span class="t tabt" style="letter-spacing:-0.061px;left:111px;top:66.5px;font-size:11px;color:#f0f0f0;font-weight:bold">CHEN.psd @ 14.6% (Layer 10, RGB/8) *</span>
<span class="t rl" style="left:105px;top:128px;font-size:9.5px;color:#b8b8b8;width:8px;text-align:center">0</span>
<span class="t rl" style="left:105px;top:163px;font-size:9.5px;color:#b8b8b8;width:8px;text-align:center">2</span>
<span class="t rl" style="left:105px;top:197px;font-size:9.5px;color:#b8b8b8;width:8px;text-align:center">4</span>
<span class="t rl" style="left:105px;top:232px;font-size:9.5px;color:#b8b8b8;width:8px;text-align:center">6</span>
<span class="t rl" style="left:105px;top:267px;font-size:9.5px;color:#b8b8b8;width:8px;text-align:center">8</span>
<span class="t rl" style="left:105px;top:301px;font-size:9.5px;color:#b8b8b8;width:8px;text-align:center">1</span>
<span class="t rl" style="left:105px;top:309px;font-size:9.5px;color:#b8b8b8;width:8px;text-align:center">0</span>
<span class="t rl" style="left:105px;top:336px;font-size:9.5px;color:#b8b8b8;width:8px;text-align:center">1</span>
<span class="t rl" style="left:105px;top:344px;font-size:9.5px;color:#b8b8b8;width:8px;text-align:center">2</span>
<span class="t rl" style="left:105px;top:371px;font-size:9.5px;color:#b8b8b8;width:8px;text-align:center">1</span>
<span class="t rl" style="left:105px;top:379px;font-size:9.5px;color:#b8b8b8;width:8px;text-align:center">4</span>
<span class="t rl" style="left:105px;top:405px;font-size:9.5px;color:#b8b8b8;width:8px;text-align:center">1</span>
<span class="t rl" style="left:105px;top:413px;font-size:9.5px;color:#b8b8b8;width:8px;text-align:center">6</span>
<span class="t rl" style="left:105px;top:440px;font-size:9.5px;color:#b8b8b8;width:8px;text-align:center">1</span>
<span class="t rl" style="left:105px;top:448px;font-size:9.5px;color:#b8b8b8;width:8px;text-align:center">8</span>
<span class="t rl" style="left:105px;top:474px;font-size:9.5px;color:#b8b8b8;width:8px;text-align:center">2</span>
<span class="t rl" style="left:105px;top:482px;font-size:9.5px;color:#b8b8b8;width:8px;text-align:center">0</span>
<span class="t rl" style="left:105px;top:509px;font-size:9.5px;color:#b8b8b8;width:8px;text-align:center">2</span>
<span class="t rl" style="left:105px;top:517px;font-size:9.5px;color:#b8b8b8;width:8px;text-align:center">2</span>
<span class="t rl" style="left:105px;top:543px;font-size:9.5px;color:#b8b8b8;width:8px;text-align:center">2</span>
<span class="t rl" style="left:105px;top:551px;font-size:9.5px;color:#b8b8b8;width:8px;text-align:center">4</span>
<span class="t rl" style="left:105px;top:578px;font-size:9.5px;color:#b8b8b8;width:8px;text-align:center">2</span>
<span class="t rl" style="left:105px;top:586px;font-size:9.5px;color:#b8b8b8;width:8px;text-align:center">6</span>
<span class="t rl" style="left:105px;top:613px;font-size:9.5px;color:#b8b8b8;width:8px;text-align:center">2</span>
<span class="t rl" style="left:105px;top:621px;font-size:9.5px;color:#b8b8b8;width:8px;text-align:center">8</span>
<span class="t rl" style="left:105px;top:647px;font-size:9.5px;color:#b8b8b8;width:8px;text-align:center">3</span>
<span class="t rl" style="left:105px;top:655px;font-size:9.5px;color:#b8b8b8;width:8px;text-align:center">0</span>
<span class="t rl" style="left:105px;top:682px;font-size:9.5px;color:#b8b8b8;width:8px;text-align:center">3</span>
<span class="t rl" style="left:105px;top:690px;font-size:9.5px;color:#b8b8b8;width:8px;text-align:center">2</span>
<span class="t rl" style="left:105px;top:717px;font-size:9.5px;color:#b8b8b8;width:8px;text-align:center">3</span>
<span class="t rl" style="left:105px;top:725px;font-size:9.5px;color:#b8b8b8;width:8px;text-align:center">4</span>
<span class="t rl" style="left:105px;top:751px;font-size:9.5px;color:#b8b8b8;width:8px;text-align:center">3</span>
<span class="t rl" style="left:105px;top:759px;font-size:9.5px;color:#b8b8b8;width:8px;text-align:center">6</span>
<span class="t rl" style="left:105px;top:786px;font-size:9.5px;color:#b8b8b8;width:8px;text-align:center">3</span>
<span class="t rl" style="left:105px;top:794px;font-size:9.5px;color:#b8b8b8;width:8px;text-align:center">8</span>
<span class="t rl" style="left:105px;top:820px;font-size:9.5px;color:#b8b8b8;width:8px;text-align:center">4</span>
<span class="t rl" style="left:105px;top:828px;font-size:9.5px;color:#b8b8b8;width:8px;text-align:center">0</span>
<span class="t rl" style="left:105px;top:855px;font-size:9.5px;color:#b8b8b8;width:8px;text-align:center">4</span>
<span class="t rl" style="left:105px;top:863px;font-size:9.5px;color:#b8b8b8;width:8px;text-align:center">2</span>
<span class="t" style="letter-spacing:-0.571px;left:107px;top:886.5px;font-size:10.5px;color:#f0f0f0;">14.64%</span>
<span class="t" style="letter-spacing:-0.331px;left:220px;top:886.5px;font-size:10.5px;color:#f0f0f0;">Doc: 49.8M/79.5M</span>
<span class="t" style="left:1017.5px;top:175.9px;font-size:18px;color:#bdbdbd;">A</span>
<span class="t" style="letter-spacing:-0.877px;left:1384.5px;top:79px;font-size:10.5px;color:#f2f2f2;font-weight:bold;">Layers</span>
<span class="t" style="letter-spacing:-0.508px;left:1403px;top:101px;font-size:11px;color:#f0f0f0;">Kind</span>
<span class="t" style="left:1511.5px;top:97.5px;font-size:14.5px;color:#c4c4c4;font-family:Liberation Serif,serif;font-weight:bold">T</span>
<span class="t" style="letter-spacing:-0.609px;left:1389.5px;top:129px;font-size:11px;color:#f0f0f0;">Normal</span>
<span class="t" style="letter-spacing:-0.420px;left:1499px;top:128px;font-size:11px;color:#f0f0f0;">Opacity:</span>
<span class="t" style="letter-spacing:-0.565px;left:1546.5px;top:128.7px;font-size:10.5px;color:#f4f4f4;">100%</span>
<span class="t" style="letter-spacing:-0.565px;left:1546.5px;top:156.7px;font-size:10.5px;color:#f4f4f4;">100%</span>
<span class="t" style="letter-spacing:-0.399px;left:1383px;top:157.5px;font-size:11px;color:#f0f0f0;">Lock:</span>
<span class="t" style="letter-spacing:-0.482px;left:1521px;top:156.5px;font-size:11px;color:#f0f0f0;">Fill:</span>
<span class="t" style="letter-spacing:-0.458px;left:1445px;top:193.5px;font-size:11px;color:#f2f2f2;">Layer 7</span>
<span class="t" style="letter-spacing:-0.458px;left:1445px;top:232.5px;font-size:11px;color:#f2f2f2;">Layer 6</span>
<span class="t" style="letter-spacing:-0.458px;left:1445px;top:271.5px;font-size:11px;color:#f2f2f2;">Layer 8</span>
<span class="t" style="letter-spacing:-0.539px;left:1445px;top:310.5px;font-size:11px;color:#f2f2f2;">Layer 10</span>
<span class="t" style="letter-spacing:-0.458px;left:1445px;top:349.5px;font-size:11px;color:#f2f2f2;">Layer 9</span>
<span class="t" style="letter-spacing:-0.522px;left:1445.5px;top:388.5px;font-size:11px;color:#f2f2f2;font-style:italic;">Background</span>
<span class="t" style="left:1425px;top:883px;font-size:13.5px;color:#c4c4c4;font-style:italic;letter-spacing:-0.6px">fx</span>

</body>
</html>
